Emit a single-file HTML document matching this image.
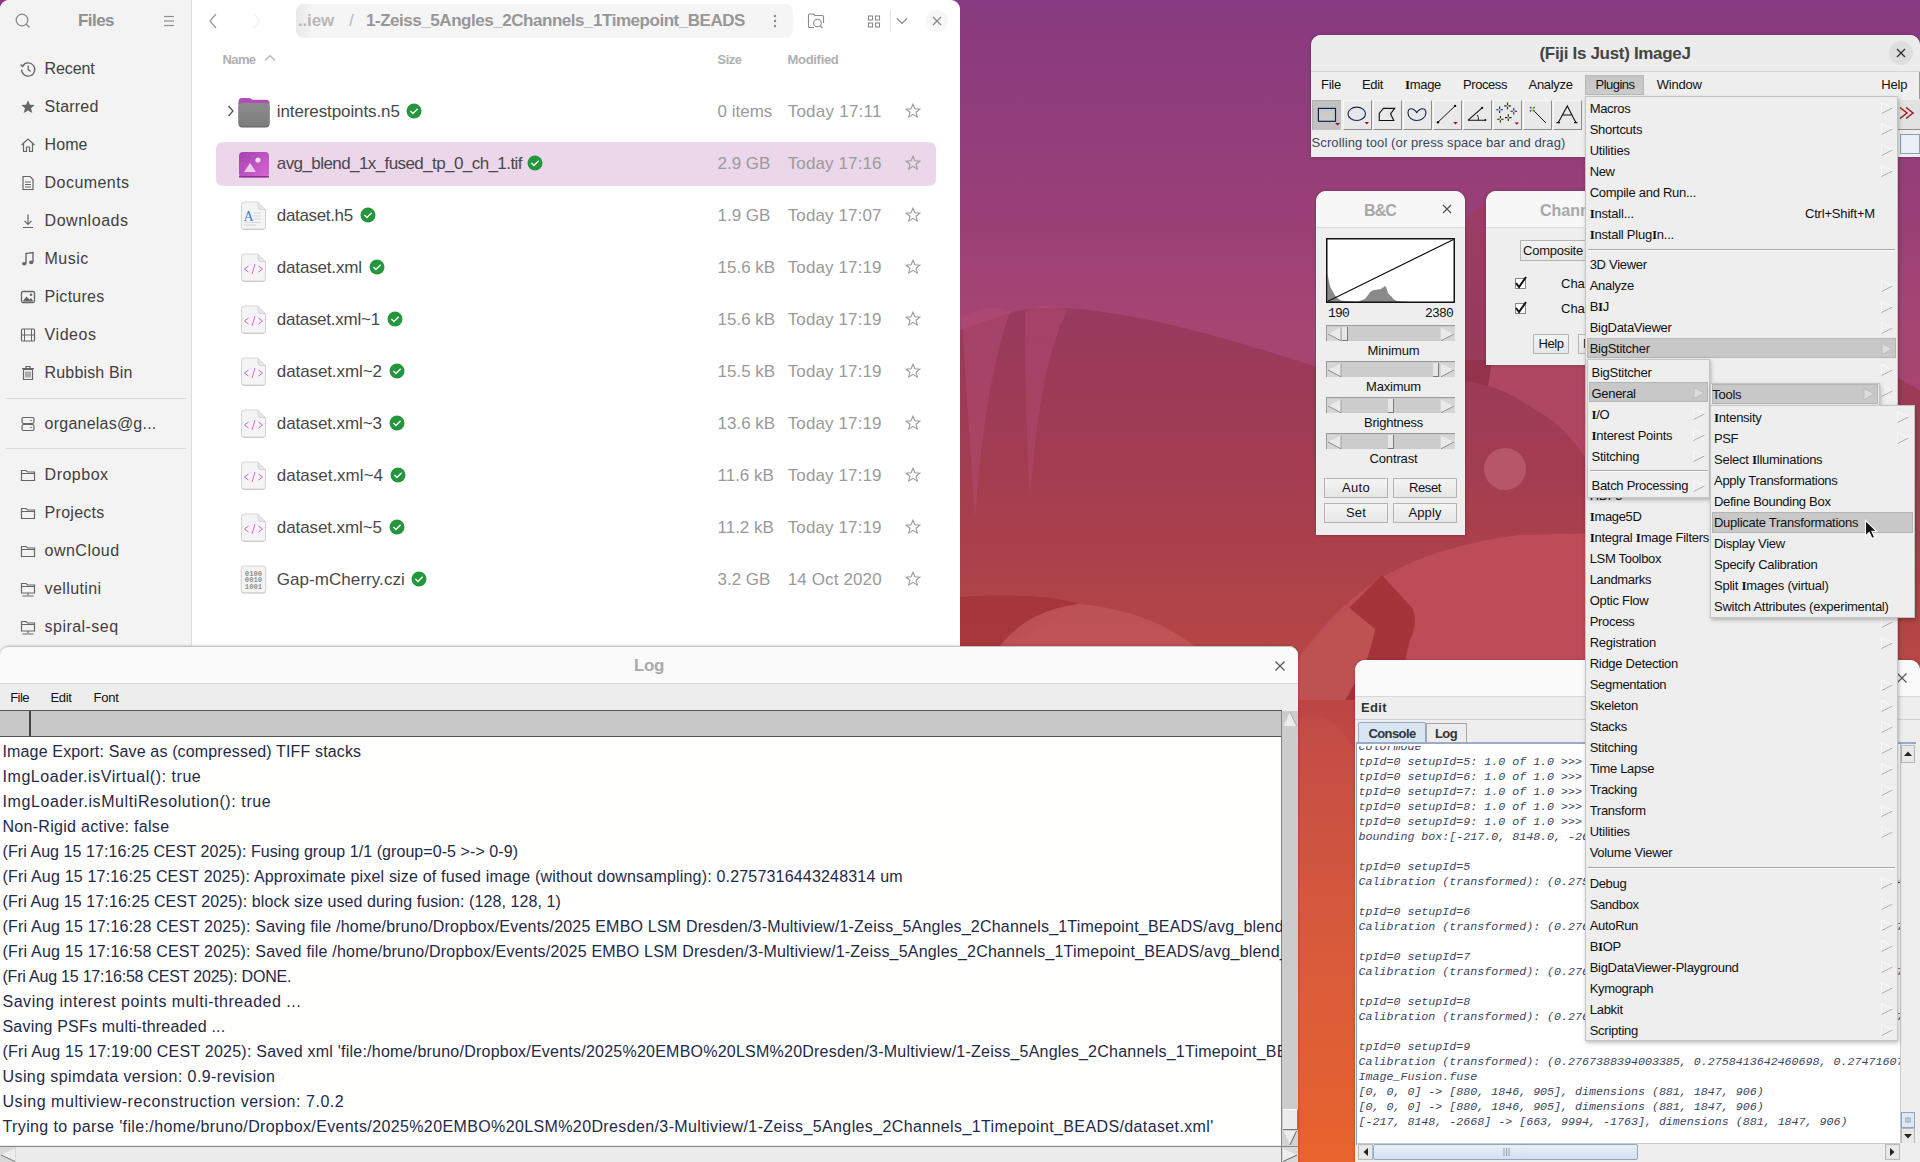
<!DOCTYPE html>
<html><head><meta charset="utf-8"><title>Screen</title>
<style>
html,body{margin:0;padding:0;width:1920px;height:1162px;overflow:hidden;}
body{position:relative;font-family:"Liberation Sans", sans-serif;background:#a0405a;}
.t{position:absolute;white-space:pre;}
.r{position:absolute;}
</style></head><body>
<svg class="r" style="left:0px;top:0px;" width="1920" height="1162" viewBox="0 0 1920 1162">
<defs>
<linearGradient id="bg" x1="0" y1="0" x2="0" y2="1162" gradientUnits="userSpaceOnUse">
<stop offset="0.0000" stop-color="#873a80"/>
<stop offset="0.1721" stop-color="#983f78"/>
<stop offset="0.2840" stop-color="#a74572"/>
<stop offset="1.0000" stop-color="#b04a60"/>
</linearGradient>
<linearGradient id="wg" x1="0" y1="0" x2="0" y2="1162" gradientUnits="userSpaceOnUse">
<stop offset="0.0000" stop-color="#9a3c6a"/>
<stop offset="0.1721" stop-color="#9d3d66"/>
<stop offset="0.2754" stop-color="#983a5d"/>
<stop offset="0.3873" stop-color="#a13c52"/>
<stop offset="0.5336" stop-color="#b14446"/>
<stop offset="0.6196" stop-color="#c24b47"/>
<stop offset="0.7745" stop-color="#d4583d"/>
<stop offset="1.0000" stop-color="#e8642e"/>
</linearGradient>
</defs>
<rect width="1920" height="1162" fill="url(#bg)"/>
<path d="M960 330 L1013 312 Q1090 292 1320 368 L1440 260 Q1470 175 1580 200 L1920 390 L1920 1162 L960 1162 Z" fill="url(#wg)"/>
<path d="M962 318 Q990 300 1010 312 Q985 380 975 520 Q968 420 962 318 Z" fill="#b04a72" opacity="0.55"/>
<path d="M1025 312 Q1045 300 1068 310 Q1040 360 1030 500 Q1024 400 1025 312 Z" fill="#b04a72" opacity="0.5"/>
<path d="M960 597 Q1040 592 1080 604 L1000 650 L960 650 Z" fill="#a33538" opacity="0.8"/>
<path d="M990 660 Q1020 610 1080 604 Q1150 610 1200 650 L1200 660 Z" fill="#c05558" opacity="0.85"/>
<path d="M1297 660 Q1340 600 1388 574 Q1440 545 1520 535 L1600 533 L1600 700 L1297 700 Z" fill="#bc4d58"/>
<path d="M1382 575 L1413 609 Q1418 625 1410 640 L1395 700 L1345 700 L1364 667 Q1372 645 1375 629 L1349 608 Z" fill="#a5343a"/><path d="M1349 608 L1375 629 Q1372 645 1364 667 L1345 700 L1297 700 L1297 662 Q1320 630 1349 608 Z" fill="#be5152"/>
<path d="M1490 360 L1590 360 L1590 465 Q1565 425 1537 411 Q1512 393 1488 386 Z" fill="#ad4762"/><path d="M1465 360 L1492 360 L1488 386 Q1476 382 1465 381 Z" fill="#93324a"/><circle cx="1505" cy="469" r="21" fill="#b85c6c" opacity="0.85"/>
<path d="M1297 720 Q1330 700 1360 760 L1360 700 L1297 700 Z" fill="#b84040" opacity="0.4"/>
</svg>
<div class="r" style="left:0px;top:0px;width:960px;height:670px;background:#ffffff;border-top-left-radius:9px;border-top-right-radius:9px;overflow:hidden;"></div>
<div class="r" style="left:0px;top:0px;width:191px;height:670px;background:#f3f3f3;border-top-left-radius:9px;"></div>
<div class="r" style="left:191px;top:0px;width:1px;height:670px;background:#dedede;"></div>
<svg class="r" style="left:14px;top:12px;" width="18" height="18" viewBox="0 0 18 18"><circle cx="8" cy="8" r="5.8" fill="none" stroke="#8a8a8a" stroke-width="1.3"/><line x1="12.2" y1="12.2" x2="15.5" y2="15.5" stroke="#8a8a8a" stroke-width="1.4"/></svg>
<div class="t" style="left:78.00px;top:11.11px;font-size:17px;line-height:20px;color:#8f8f8f;font-weight:700;letter-spacing:-0.547px;">Files</div>
<svg class="r" style="left:162px;top:15px;" width="14" height="12" viewBox="0 0 14 12"><g stroke="#8f8f8f" stroke-width="1.2"><line x1="2" y1="1.5" x2="12" y2="1.5"/><line x1="2" y1="6" x2="12" y2="6"/><line x1="2" y1="10.5" x2="12" y2="10.5"/></g></svg>
<div class="t" style="left:44.60px;top:58.96px;font-size:16px;line-height:19px;color:#404040;letter-spacing:-0.122px;">Recent</div>
<div class="t" style="left:44.60px;top:96.96px;font-size:16px;line-height:19px;color:#404040;letter-spacing:0.214px;">Starred</div>
<div class="t" style="left:44.60px;top:134.96px;font-size:16px;line-height:19px;color:#404040;letter-spacing:0.074px;">Home</div>
<div class="t" style="left:44.60px;top:172.96px;font-size:16px;line-height:19px;color:#404040;letter-spacing:0.448px;">Documents</div>
<div class="t" style="left:44.60px;top:210.96px;font-size:16px;line-height:19px;color:#404040;letter-spacing:0.531px;">Downloads</div>
<div class="t" style="left:44.60px;top:248.96px;font-size:16px;line-height:19px;color:#404040;letter-spacing:0.441px;">Music</div>
<div class="t" style="left:44.60px;top:286.96px;font-size:16px;line-height:19px;color:#404040;letter-spacing:0.271px;">Pictures</div>
<div class="t" style="left:44.60px;top:324.96px;font-size:16px;line-height:19px;color:#404040;letter-spacing:0.555px;">Videos</div>
<div class="t" style="left:44.60px;top:362.96px;font-size:16px;line-height:19px;color:#404040;letter-spacing:0.151px;">Rubbish Bin</div>
<div class="t" style="left:44.60px;top:413.96px;font-size:16px;line-height:19px;color:#404040;letter-spacing:0.225px;">organelas@g...</div>
<div class="t" style="left:44.60px;top:464.96px;font-size:16px;line-height:19px;color:#404040;letter-spacing:0.498px;">Dropbox</div>
<div class="t" style="left:44.60px;top:502.96px;font-size:16px;line-height:19px;color:#404040;letter-spacing:0.271px;">Projects</div>
<div class="t" style="left:44.60px;top:540.96px;font-size:16px;line-height:19px;color:#404040;letter-spacing:0.473px;">ownCloud</div>
<div class="t" style="left:44.60px;top:578.96px;font-size:16px;line-height:19px;color:#404040;letter-spacing:0.398px;">vellutini</div>
<div class="t" style="left:44.60px;top:616.96px;font-size:16px;line-height:19px;color:#404040;letter-spacing:0.459px;">spiral-seq</div>
<svg class="r" style="left:19px;top:59.5px;" width="18" height="18" viewBox="0 0 18 18"><path d="M3.5 6.2 A6.6 6.6 0 1 1 2.6 9.5" fill="none" stroke="#666666" stroke-width="1.3"/><path d="M1.5 4.5 L3.6 6.6 L5.6 4.2" fill="none" stroke="#666666" stroke-width="1.2"/><path d="M9.2 5.5 V9.6 L11.6 11.5" fill="none" stroke="#666666" stroke-width="1.3"/></svg>
<svg class="r" style="left:19px;top:97.5px;" width="18" height="18" viewBox="0 0 18 18"><path d="M9 2.2 L10.9 6.8 L15.8 7.1 L12 10.3 L13.3 15.1 L9 12.4 L4.7 15.1 L6 10.3 L2.2 7.1 L7.1 6.8 Z" fill="#666666"/></svg>
<svg class="r" style="left:19px;top:135.5px;" width="18" height="18" viewBox="0 0 18 18"><path d="M2.5 9 L9 3 L15.5 9 M4.5 7.5 V15.5 H7.5 V11 H10.5 V15.5 H13.5 V7.5" fill="none" stroke="#666666" stroke-width="1.2"/></svg>
<svg class="r" style="left:19px;top:173.5px;" width="18" height="18" viewBox="0 0 18 18"><path d="M4 2.5 H11 L14 5.5 V15.5 H4 Z" fill="none" stroke="#666666" stroke-width="1.2"/><g stroke="#666666" stroke-width="1"><line x1="6" y1="8" x2="12" y2="8"/><line x1="6" y1="10.5" x2="12" y2="10.5"/><line x1="6" y1="13" x2="12" y2="13"/></g></svg>
<svg class="r" style="left:19px;top:211.5px;" width="18" height="18" viewBox="0 0 18 18"><path d="M9 2.5 V12 M5.5 8.8 L9 12.3 L12.5 8.8 M4 15.5 H14" fill="none" stroke="#666666" stroke-width="1.2"/></svg>
<svg class="r" style="left:19px;top:249.5px;" width="18" height="18" viewBox="0 0 18 18"><path d="M7 13.5 V3.5 L14 2.5 V12" fill="none" stroke="#666666" stroke-width="1.4"/><ellipse cx="5.2" cy="13.8" rx="2.2" ry="1.8" fill="#666666"/><ellipse cx="12.2" cy="12.4" rx="2.2" ry="1.8" fill="#666666"/></svg>
<svg class="r" style="left:19px;top:287.5px;" width="18" height="18" viewBox="0 0 18 18"><rect x="2.5" y="3.5" width="13" height="11" rx="1.5" fill="none" stroke="#666666" stroke-width="1.3"/><path d="M3.5 13.5 L7.5 8.5 L10.5 11.5 L12 10 L14.5 13.5 Z" fill="#666666"/><circle cx="12" cy="6.8" r="1.3" fill="#666666"/></svg>
<svg class="r" style="left:19px;top:325.5px;" width="18" height="18" viewBox="0 0 18 18"><rect x="2.5" y="3" width="13" height="12" rx="1" fill="none" stroke="#666666" stroke-width="1.2"/><g stroke="#666666" stroke-width="1"><line x1="5.5" y1="3" x2="5.5" y2="15"/><line x1="12.5" y1="3" x2="12.5" y2="15"/><line x1="2.5" y1="9" x2="15.5" y2="9"/></g></svg>
<svg class="r" style="left:19px;top:363.5px;" width="18" height="18" viewBox="0 0 18 18"><path d="M4.5 5.5 H13.5 V15.5 H4.5 Z M3 4.5 H15 M7 4.5 V2.5 H11 V4.5" fill="none" stroke="#666666" stroke-width="1.2"/><g stroke="#666666" stroke-width="1"><line x1="7" y1="7.5" x2="7" y2="13.5"/><line x1="9" y1="7.5" x2="9" y2="13.5"/><line x1="11" y1="7.5" x2="11" y2="13.5"/></g></svg>
<svg class="r" style="left:19px;top:414.5px;" width="18" height="18" viewBox="0 0 18 18"><rect x="3" y="2.5" width="12" height="6" rx="1.5" fill="none" stroke="#666666" stroke-width="1.2"/><rect x="3" y="9.5" width="12" height="6" rx="1.5" fill="none" stroke="#666666" stroke-width="1.2"/><circle cx="12" cy="5.5" r="0.8" fill="#666666"/><circle cx="12" cy="12.5" r="0.8" fill="#666666"/></svg>
<svg class="r" style="left:19px;top:465.5px;" width="18" height="18" viewBox="0 0 18 18"><path d="M2.5 4.5 H7 L8.5 6 H15.5 V14.5 H2.5 Z M2.5 7.5 H15.5" fill="none" stroke="#666666" stroke-width="1.2"/></svg>
<svg class="r" style="left:19px;top:503.5px;" width="18" height="18" viewBox="0 0 18 18"><path d="M2.5 4.5 H7 L8.5 6 H15.5 V14.5 H2.5 Z M2.5 7.5 H15.5" fill="none" stroke="#666666" stroke-width="1.2"/></svg>
<svg class="r" style="left:19px;top:541.5px;" width="18" height="18" viewBox="0 0 18 18"><path d="M2.5 4.5 H7 L8.5 6 H15.5 V14.5 H2.5 Z M2.5 7.5 H15.5" fill="none" stroke="#666666" stroke-width="1.2"/></svg>
<svg class="r" style="left:19px;top:579.5px;" width="18" height="18" viewBox="0 0 18 18"><path d="M2.5 3.5 H7 L8.5 5 H15.5 V13 H2.5 Z M2.5 6.5 H15.5 M3.5 16 H14.5 M9 13 V15" fill="none" stroke="#666666" stroke-width="1.2"/></svg>
<svg class="r" style="left:19px;top:617.5px;" width="18" height="18" viewBox="0 0 18 18"><path d="M2.5 3.5 H7 L8.5 5 H15.5 V13 H2.5 Z M2.5 6.5 H15.5 M3.5 16 H14.5 M9 13 V15" fill="none" stroke="#666666" stroke-width="1.2"/></svg>
<div class="r" style="left:6px;top:398px;width:180px;height:1px;background:#dcdcdc;"></div>
<div class="r" style="left:6px;top:448px;width:180px;height:1px;background:#dcdcdc;"></div>
<svg class="r" style="left:206px;top:12px;" width="14" height="18" viewBox="0 0 14 18"><path d="M10 2 L4 9 L10 16" fill="none" stroke="#9a9a9a" stroke-width="1.3"/></svg>
<svg class="r" style="left:250px;top:12px;" width="14" height="18" viewBox="0 0 14 18"><path d="M4 2 L10 9 L4 16" fill="none" stroke="#f3f3f3" stroke-width="1.3"/></svg>
<div class="r" style="left:296px;top:4px;width:497px;height:34px;background:linear-gradient(90deg,#e8e8e8 0px,#f5f5f5 16px,#f5f5f5 100%);border-radius:8px;"></div>
<div class="t" style="left:298.00px;top:11.11px;font-size:17px;line-height:20px;color:#b8b8b8;font-weight:700;letter-spacing:-0.166px;">..iew</div>
<div class="t" style="left:349.00px;top:11.11px;font-size:17px;line-height:20px;color:#b8b8b8;">/</div>
<div class="t" style="left:366.00px;top:11.11px;font-size:17px;line-height:20px;color:#979797;font-weight:700;letter-spacing:-0.462px;">1-Zeiss_5Angles_2Channels_1Timepoint_BEADS</div>
<svg class="r" style="left:770px;top:12px;" width="10" height="18" viewBox="0 0 10 18"><g fill="#8a8a8a"><circle cx="5" cy="4" r="1.2"/><circle cx="5" cy="9" r="1.2"/><circle cx="5" cy="14" r="1.2"/></g></svg>
<svg class="r" style="left:805px;top:10px;" width="22" height="22" viewBox="0 0 22 22"><path d="M9 17.5 H4.5 Q3.5 17.5 3.5 16.5 V5 Q3.5 4 4.5 4 H8.5 L10 5.5 H17.5 Q18.5 5.5 18.5 6.5 V13" fill="none" stroke="#8a8a8a" stroke-width="1.1"/><circle cx="12.5" cy="13" r="3.8" fill="none" stroke="#8a8a8a" stroke-width="1.1"/><line x1="15.3" y1="15.8" x2="17.5" y2="18" stroke="#8a8a8a" stroke-width="1.2"/></svg>
<svg class="r" style="left:866px;top:14px;" width="16" height="16" viewBox="0 0 16 16"><g fill="none" stroke="#8a8a8a" stroke-width="1.1"><rect x="2.5" y="2" width="4" height="4"/><rect x="9.5" y="2" width="4" height="4"/><rect x="2.5" y="9" width="4" height="4"/><rect x="9.5" y="9" width="4" height="4"/></g></svg>
<div class="r" style="left:890px;top:10px;width:1px;height:22px;background:#e4e4e4;"></div>
<svg class="r" style="left:895px;top:16px;" width="14" height="10" viewBox="0 0 14 10"><path d="M2 2.5 L7 7.5 L12 2.5" fill="none" stroke="#8a8a8a" stroke-width="1.2"/></svg>
<div class="r" style="left:926px;top:10px;width:22px;height:22px;background:#f7f7f7;border-radius:11px;"></div>
<svg class="r" style="left:931px;top:15px;" width="12" height="12" viewBox="0 0 12 12"><path d="M2 2 L10 10 M10 2 L2 10" stroke="#8a8a8a" stroke-width="1.3"/></svg>
<div class="t" style="left:222.50px;top:51.50px;font-size:13px;line-height:16px;color:#b0b0b0;font-weight:700;letter-spacing:-0.605px;">Name</div>
<svg class="r" style="left:263px;top:53px;" width="14" height="10" viewBox="0 0 14 10"><path d="M2 7.5 L7 2.5 L12 7.5" fill="none" stroke="#b0b0b0" stroke-width="1.2"/></svg>
<div class="t" style="left:717.50px;top:51.50px;font-size:13px;line-height:16px;color:#b0b0b0;font-weight:700;letter-spacing:-0.504px;">Size</div>
<div class="t" style="left:787.50px;top:51.50px;font-size:13px;line-height:16px;color:#b0b0b0;font-weight:700;letter-spacing:-0.303px;">Modified</div>
<div class="r" style="left:216px;top:142px;width:720px;height:44px;background:#ebd6ea;border-radius:7px;"></div>
<div class="t" style="left:276.80px;top:102.41px;font-size:17px;line-height:20px;color:#484848;letter-spacing:-0.101px;">interestpoints.n5</div>
<svg class="r" style="left:406px;top:103px;" width="16" height="16" viewBox="0 0 16 16"><circle cx="8" cy="8" r="7.5" fill="#24963c"/><path d="M4.4 8 L6.9 10.5 L11.7 5.7" fill="none" stroke="#fff" stroke-width="1.25"/></svg>
<div class="t" style="left:717.50px;top:102.41px;font-size:17px;line-height:20px;color:#9a9a9a;">0 items</div>
<div class="t" style="left:787.70px;top:102.41px;font-size:17px;line-height:20px;color:#9a9a9a;letter-spacing:0.241px;">Today 17:11</div>
<svg class="r" style="left:904px;top:102px;" width="18" height="18" viewBox="0 0 18 18"><path d="M9 2.2 L10.9 6.8 L15.8 7.1 L12 10.3 L13.3 15.1 L9 12.4 L4.7 15.1 L6 10.3 L2.2 7.1 L7.1 6.8 Z" fill="none" stroke="#9a9a9a" stroke-width="1.1"/></svg>
<svg class="r" style="left:227px;top:105px;" width="8" height="12" viewBox="0 0 8 12"><path d="M1.5 1 L6 6 L1.5 11" fill="none" stroke="#555" stroke-width="1.3"/></svg>
<svg class="r" style="left:237px;top:97px;" width="34" height="31" viewBox="0 0 34 31"><defs><linearGradient id="fg" x1="0" y1="0" x2="0" y2="1"><stop offset="0" stop-color="#8c8c8c"/><stop offset="1" stop-color="#7c7c7c"/></linearGradient></defs><path d="M1.5 5 Q1.5 1 5 1 H12 Q14 1 15.5 2.8 H29 Q32.5 2.8 32.5 6 V12 H1.5 Z" fill="#b04cb8"/><rect x="1.5" y="7" width="31" height="23.5" rx="4" fill="#5e5e5e"/><rect x="1.5" y="6" width="31" height="23.5" rx="4" fill="url(#fg)"/></svg>
<div class="t" style="left:276.80px;top:154.41px;font-size:17px;line-height:20px;color:#484848;letter-spacing:-0.583px;">avg_blend_1x_fused_tp_0_ch_1.tif</div>
<svg class="r" style="left:527px;top:155px;" width="16" height="16" viewBox="0 0 16 16"><circle cx="8" cy="8" r="7.5" fill="#24963c"/><path d="M4.4 8 L6.9 10.5 L11.7 5.7" fill="none" stroke="#fff" stroke-width="1.25"/></svg>
<div class="t" style="left:717.50px;top:154.41px;font-size:17px;line-height:20px;color:#9a9a9a;">2.9 GB</div>
<div class="t" style="left:787.70px;top:154.41px;font-size:17px;line-height:20px;color:#9a9a9a;letter-spacing:0.126px;">Today 17:16</div>
<svg class="r" style="left:904px;top:154px;" width="18" height="18" viewBox="0 0 18 18"><path d="M9 2.2 L10.9 6.8 L15.8 7.1 L12 10.3 L13.3 15.1 L9 12.4 L4.7 15.1 L6 10.3 L2.2 7.1 L7.1 6.8 Z" fill="none" stroke="#9a9a9a" stroke-width="1.1"/></svg>
<svg class="r" style="left:238px;top:151px;" width="32" height="28" viewBox="0 0 32 28"><defs><linearGradient id="ig" x1="0" y1="0" x2="1" y2="1"><stop offset="0" stop-color="#a53fb0"/><stop offset="1" stop-color="#d668d4"/></linearGradient></defs><rect x="1" y="1" width="30" height="25.5" rx="4" fill="url(#ig)"/><rect x="1" y="25" width="30" height="1.5" fill="#8b3291"/><path d="M6 21 L12 12 L18 21 Z" fill="#f0c8ec"/><circle cx="20" cy="9" r="2.6" fill="#f4d8f0"/></svg>
<div class="t" style="left:276.80px;top:206.41px;font-size:17px;line-height:20px;color:#484848;letter-spacing:-0.338px;">dataset.h5</div>
<svg class="r" style="left:360px;top:207px;" width="16" height="16" viewBox="0 0 16 16"><circle cx="8" cy="8" r="7.5" fill="#24963c"/><path d="M4.4 8 L6.9 10.5 L11.7 5.7" fill="none" stroke="#fff" stroke-width="1.25"/></svg>
<div class="t" style="left:717.50px;top:206.41px;font-size:17px;line-height:20px;color:#9a9a9a;">1.9 GB</div>
<div class="t" style="left:787.70px;top:206.41px;font-size:17px;line-height:20px;color:#9a9a9a;letter-spacing:0.126px;">Today 17:07</div>
<svg class="r" style="left:904px;top:206px;" width="18" height="18" viewBox="0 0 18 18"><path d="M9 2.2 L10.9 6.8 L15.8 7.1 L12 10.3 L13.3 15.1 L9 12.4 L4.7 15.1 L6 10.3 L2.2 7.1 L7.1 6.8 Z" fill="none" stroke="#9a9a9a" stroke-width="1.1"/></svg>
<svg class="r" style="left:240px;top:201px;" width="27" height="30" viewBox="0 0 27 30"><path d="M1.5 4 Q1.5 1 4.5 1 H18 L25.5 8.5 V26 Q25.5 29 22.5 29 H4.5 Q1.5 29 1.5 26 Z" fill="#c8c8c8"/><path d="M1.5 3.5 Q1.5 1 4 1 H18 L25.5 8.5 V25.5 Q25.5 28 23 28 H4 Q1.5 28 1.5 25.5 Z" fill="#f4f4f4" stroke="#d2d2d2" stroke-width="0.9"/><path d="M18 1 V6 Q18 8.5 20.5 8.5 H25.5" fill="#e6e6e6" stroke="#d2d2d2" stroke-width="0.9"/><text x="3.5" y="20" font-family="Liberation Serif" font-size="14" fill="#3b7fd0">A</text><g stroke="#cfcfcf" stroke-width="0.8"><line x1="14" y1="12" x2="21" y2="12"/><line x1="14" y1="15" x2="21" y2="15"/><line x1="14" y1="18" x2="21" y2="18"/><line x1="4" y1="21.5" x2="21" y2="21.5"/><line x1="4" y1="24" x2="16" y2="24"/></g></svg>
<div class="t" style="left:276.80px;top:258.41px;font-size:17px;line-height:20px;color:#484848;letter-spacing:-0.173px;">dataset.xml</div>
<svg class="r" style="left:369px;top:259px;" width="16" height="16" viewBox="0 0 16 16"><circle cx="8" cy="8" r="7.5" fill="#24963c"/><path d="M4.4 8 L6.9 10.5 L11.7 5.7" fill="none" stroke="#fff" stroke-width="1.25"/></svg>
<div class="t" style="left:717.50px;top:258.41px;font-size:17px;line-height:20px;color:#9a9a9a;">15.6 kB</div>
<div class="t" style="left:787.70px;top:258.41px;font-size:17px;line-height:20px;color:#9a9a9a;letter-spacing:0.126px;">Today 17:19</div>
<svg class="r" style="left:904px;top:258px;" width="18" height="18" viewBox="0 0 18 18"><path d="M9 2.2 L10.9 6.8 L15.8 7.1 L12 10.3 L13.3 15.1 L9 12.4 L4.7 15.1 L6 10.3 L2.2 7.1 L7.1 6.8 Z" fill="none" stroke="#9a9a9a" stroke-width="1.1"/></svg>
<svg class="r" style="left:240px;top:253px;" width="27" height="30" viewBox="0 0 27 30"><path d="M1.5 4 Q1.5 1 4.5 1 H18 L25.5 8.5 V26 Q25.5 29 22.5 29 H4.5 Q1.5 29 1.5 26 Z" fill="#c8c8c8"/><path d="M1.5 3.5 Q1.5 1 4 1 H18 L25.5 8.5 V25.5 Q25.5 28 23 28 H4 Q1.5 28 1.5 25.5 Z" fill="#f4f4f4" stroke="#d2d2d2" stroke-width="0.9"/><path d="M18 1 V6 Q18 8.5 20.5 8.5 H25.5" fill="#e6e6e6" stroke="#d2d2d2" stroke-width="0.9"/><path d="M8.5 13 L4.5 16 L8.5 19 M18.5 13 L22.5 16 L18.5 19 M15 11 L12 21" fill="none" stroke="#d865d4" stroke-width="1"/></svg>
<div class="t" style="left:276.80px;top:310.41px;font-size:17px;line-height:20px;color:#484848;letter-spacing:-0.252px;">dataset.xml~1</div>
<svg class="r" style="left:387px;top:311px;" width="16" height="16" viewBox="0 0 16 16"><circle cx="8" cy="8" r="7.5" fill="#24963c"/><path d="M4.4 8 L6.9 10.5 L11.7 5.7" fill="none" stroke="#fff" stroke-width="1.25"/></svg>
<div class="t" style="left:717.50px;top:310.41px;font-size:17px;line-height:20px;color:#9a9a9a;">15.6 kB</div>
<div class="t" style="left:787.70px;top:310.41px;font-size:17px;line-height:20px;color:#9a9a9a;letter-spacing:0.126px;">Today 17:19</div>
<svg class="r" style="left:904px;top:310px;" width="18" height="18" viewBox="0 0 18 18"><path d="M9 2.2 L10.9 6.8 L15.8 7.1 L12 10.3 L13.3 15.1 L9 12.4 L4.7 15.1 L6 10.3 L2.2 7.1 L7.1 6.8 Z" fill="none" stroke="#9a9a9a" stroke-width="1.1"/></svg>
<svg class="r" style="left:240px;top:305px;" width="27" height="30" viewBox="0 0 27 30"><path d="M1.5 4 Q1.5 1 4.5 1 H18 L25.5 8.5 V26 Q25.5 29 22.5 29 H4.5 Q1.5 29 1.5 26 Z" fill="#c8c8c8"/><path d="M1.5 3.5 Q1.5 1 4 1 H18 L25.5 8.5 V25.5 Q25.5 28 23 28 H4 Q1.5 28 1.5 25.5 Z" fill="#f4f4f4" stroke="#d2d2d2" stroke-width="0.9"/><path d="M18 1 V6 Q18 8.5 20.5 8.5 H25.5" fill="#e6e6e6" stroke="#d2d2d2" stroke-width="0.9"/><path d="M8.5 13 L4.5 16 L8.5 19 M18.5 13 L22.5 16 L18.5 19 M15 11 L12 21" fill="none" stroke="#d865d4" stroke-width="1"/></svg>
<div class="t" style="left:276.80px;top:362.41px;font-size:17px;line-height:20px;color:#484848;letter-spacing:-0.099px;">dataset.xml~2</div>
<svg class="r" style="left:389px;top:363px;" width="16" height="16" viewBox="0 0 16 16"><circle cx="8" cy="8" r="7.5" fill="#24963c"/><path d="M4.4 8 L6.9 10.5 L11.7 5.7" fill="none" stroke="#fff" stroke-width="1.25"/></svg>
<div class="t" style="left:717.50px;top:362.41px;font-size:17px;line-height:20px;color:#9a9a9a;">15.5 kB</div>
<div class="t" style="left:787.70px;top:362.41px;font-size:17px;line-height:20px;color:#9a9a9a;letter-spacing:0.126px;">Today 17:19</div>
<svg class="r" style="left:904px;top:362px;" width="18" height="18" viewBox="0 0 18 18"><path d="M9 2.2 L10.9 6.8 L15.8 7.1 L12 10.3 L13.3 15.1 L9 12.4 L4.7 15.1 L6 10.3 L2.2 7.1 L7.1 6.8 Z" fill="none" stroke="#9a9a9a" stroke-width="1.1"/></svg>
<svg class="r" style="left:240px;top:357px;" width="27" height="30" viewBox="0 0 27 30"><path d="M1.5 4 Q1.5 1 4.5 1 H18 L25.5 8.5 V26 Q25.5 29 22.5 29 H4.5 Q1.5 29 1.5 26 Z" fill="#c8c8c8"/><path d="M1.5 3.5 Q1.5 1 4 1 H18 L25.5 8.5 V25.5 Q25.5 28 23 28 H4 Q1.5 28 1.5 25.5 Z" fill="#f4f4f4" stroke="#d2d2d2" stroke-width="0.9"/><path d="M18 1 V6 Q18 8.5 20.5 8.5 H25.5" fill="#e6e6e6" stroke="#d2d2d2" stroke-width="0.9"/><path d="M8.5 13 L4.5 16 L8.5 19 M18.5 13 L22.5 16 L18.5 19 M15 11 L12 21" fill="none" stroke="#d865d4" stroke-width="1"/></svg>
<div class="t" style="left:276.80px;top:414.41px;font-size:17px;line-height:20px;color:#484848;letter-spacing:-0.099px;">dataset.xml~3</div>
<svg class="r" style="left:389px;top:415px;" width="16" height="16" viewBox="0 0 16 16"><circle cx="8" cy="8" r="7.5" fill="#24963c"/><path d="M4.4 8 L6.9 10.5 L11.7 5.7" fill="none" stroke="#fff" stroke-width="1.25"/></svg>
<div class="t" style="left:717.50px;top:414.41px;font-size:17px;line-height:20px;color:#9a9a9a;">13.6 kB</div>
<div class="t" style="left:787.70px;top:414.41px;font-size:17px;line-height:20px;color:#9a9a9a;letter-spacing:0.126px;">Today 17:19</div>
<svg class="r" style="left:904px;top:414px;" width="18" height="18" viewBox="0 0 18 18"><path d="M9 2.2 L10.9 6.8 L15.8 7.1 L12 10.3 L13.3 15.1 L9 12.4 L4.7 15.1 L6 10.3 L2.2 7.1 L7.1 6.8 Z" fill="none" stroke="#9a9a9a" stroke-width="1.1"/></svg>
<svg class="r" style="left:240px;top:409px;" width="27" height="30" viewBox="0 0 27 30"><path d="M1.5 4 Q1.5 1 4.5 1 H18 L25.5 8.5 V26 Q25.5 29 22.5 29 H4.5 Q1.5 29 1.5 26 Z" fill="#c8c8c8"/><path d="M1.5 3.5 Q1.5 1 4 1 H18 L25.5 8.5 V25.5 Q25.5 28 23 28 H4 Q1.5 28 1.5 25.5 Z" fill="#f4f4f4" stroke="#d2d2d2" stroke-width="0.9"/><path d="M18 1 V6 Q18 8.5 20.5 8.5 H25.5" fill="#e6e6e6" stroke="#d2d2d2" stroke-width="0.9"/><path d="M8.5 13 L4.5 16 L8.5 19 M18.5 13 L22.5 16 L18.5 19 M15 11 L12 21" fill="none" stroke="#d865d4" stroke-width="1"/></svg>
<div class="t" style="left:276.80px;top:466.41px;font-size:17px;line-height:20px;color:#484848;letter-spacing:-0.022px;">dataset.xml~4</div>
<svg class="r" style="left:390px;top:467px;" width="16" height="16" viewBox="0 0 16 16"><circle cx="8" cy="8" r="7.5" fill="#24963c"/><path d="M4.4 8 L6.9 10.5 L11.7 5.7" fill="none" stroke="#fff" stroke-width="1.25"/></svg>
<div class="t" style="left:717.50px;top:466.41px;font-size:17px;line-height:20px;color:#9a9a9a;">11.6 kB</div>
<div class="t" style="left:787.70px;top:466.41px;font-size:17px;line-height:20px;color:#9a9a9a;letter-spacing:0.126px;">Today 17:19</div>
<svg class="r" style="left:904px;top:466px;" width="18" height="18" viewBox="0 0 18 18"><path d="M9 2.2 L10.9 6.8 L15.8 7.1 L12 10.3 L13.3 15.1 L9 12.4 L4.7 15.1 L6 10.3 L2.2 7.1 L7.1 6.8 Z" fill="none" stroke="#9a9a9a" stroke-width="1.1"/></svg>
<svg class="r" style="left:240px;top:461px;" width="27" height="30" viewBox="0 0 27 30"><path d="M1.5 4 Q1.5 1 4.5 1 H18 L25.5 8.5 V26 Q25.5 29 22.5 29 H4.5 Q1.5 29 1.5 26 Z" fill="#c8c8c8"/><path d="M1.5 3.5 Q1.5 1 4 1 H18 L25.5 8.5 V25.5 Q25.5 28 23 28 H4 Q1.5 28 1.5 25.5 Z" fill="#f4f4f4" stroke="#d2d2d2" stroke-width="0.9"/><path d="M18 1 V6 Q18 8.5 20.5 8.5 H25.5" fill="#e6e6e6" stroke="#d2d2d2" stroke-width="0.9"/><path d="M8.5 13 L4.5 16 L8.5 19 M18.5 13 L22.5 16 L18.5 19 M15 11 L12 21" fill="none" stroke="#d865d4" stroke-width="1"/></svg>
<div class="t" style="left:276.80px;top:518.41px;font-size:17px;line-height:20px;color:#484848;letter-spacing:-0.099px;">dataset.xml~5</div>
<svg class="r" style="left:389px;top:519px;" width="16" height="16" viewBox="0 0 16 16"><circle cx="8" cy="8" r="7.5" fill="#24963c"/><path d="M4.4 8 L6.9 10.5 L11.7 5.7" fill="none" stroke="#fff" stroke-width="1.25"/></svg>
<div class="t" style="left:717.50px;top:518.41px;font-size:17px;line-height:20px;color:#9a9a9a;">11.2 kB</div>
<div class="t" style="left:787.70px;top:518.41px;font-size:17px;line-height:20px;color:#9a9a9a;letter-spacing:0.126px;">Today 17:19</div>
<svg class="r" style="left:904px;top:518px;" width="18" height="18" viewBox="0 0 18 18"><path d="M9 2.2 L10.9 6.8 L15.8 7.1 L12 10.3 L13.3 15.1 L9 12.4 L4.7 15.1 L6 10.3 L2.2 7.1 L7.1 6.8 Z" fill="none" stroke="#9a9a9a" stroke-width="1.1"/></svg>
<svg class="r" style="left:240px;top:513px;" width="27" height="30" viewBox="0 0 27 30"><path d="M1.5 4 Q1.5 1 4.5 1 H18 L25.5 8.5 V26 Q25.5 29 22.5 29 H4.5 Q1.5 29 1.5 26 Z" fill="#c8c8c8"/><path d="M1.5 3.5 Q1.5 1 4 1 H18 L25.5 8.5 V25.5 Q25.5 28 23 28 H4 Q1.5 28 1.5 25.5 Z" fill="#f4f4f4" stroke="#d2d2d2" stroke-width="0.9"/><path d="M18 1 V6 Q18 8.5 20.5 8.5 H25.5" fill="#e6e6e6" stroke="#d2d2d2" stroke-width="0.9"/><path d="M8.5 13 L4.5 16 L8.5 19 M18.5 13 L22.5 16 L18.5 19 M15 11 L12 21" fill="none" stroke="#d865d4" stroke-width="1"/></svg>
<div class="t" style="left:276.80px;top:570.41px;font-size:17px;line-height:20px;color:#484848;letter-spacing:0.055px;">Gap-mCherry.czi</div>
<svg class="r" style="left:411px;top:571px;" width="16" height="16" viewBox="0 0 16 16"><circle cx="8" cy="8" r="7.5" fill="#24963c"/><path d="M4.4 8 L6.9 10.5 L11.7 5.7" fill="none" stroke="#fff" stroke-width="1.25"/></svg>
<div class="t" style="left:717.50px;top:570.41px;font-size:17px;line-height:20px;color:#9a9a9a;">3.2 GB</div>
<div class="t" style="left:787.70px;top:570.41px;font-size:17px;line-height:20px;color:#9a9a9a;letter-spacing:0.128px;">14 Oct 2020</div>
<svg class="r" style="left:904px;top:570px;" width="18" height="18" viewBox="0 0 18 18"><path d="M9 2.2 L10.9 6.8 L15.8 7.1 L12 10.3 L13.3 15.1 L9 12.4 L4.7 15.1 L6 10.3 L2.2 7.1 L7.1 6.8 Z" fill="none" stroke="#9a9a9a" stroke-width="1.1"/></svg>
<svg class="r" style="left:240px;top:565px;" width="27" height="30" viewBox="0 0 27 30"><rect x="1" y="1.5" width="25" height="27" rx="3" fill="#c8c8c8"/><rect x="1.2" y="1" width="24.6" height="26.8" rx="3" fill="#f4f4f4" stroke="#d0d0d0" stroke-width="0.9"/><g font-family="Liberation Mono" font-size="7.2" font-weight="700" fill="#8f8f8f" text-anchor="middle"><text x="13.5" y="10.5">0100</text><text x="13.5" y="17.2">0010</text><text x="13.5" y="24">1001</text></g></svg>
<div class="r" style="left:0px;top:646px;width:1298px;height:516px;background:#eeeeee;border-top-left-radius:9px;border-top-right-radius:9px;overflow:hidden;box-shadow:0 0 3px rgba(0,0,0,0.25);"></div>
<div class="r" style="left:0px;top:646px;width:1298px;height:37px;background:#fafafa;border-top-left-radius:9px;border-top-right-radius:9px;border-top:1px solid #c4c4c4;box-sizing:border-box;"></div>
<div class="r" style="left:0px;top:683px;width:1298px;height:1px;background:#d6d6d6;"></div>
<div class="t" style="left:634.00px;top:656.11px;font-size:17px;line-height:20px;color:#a9a9a9;font-weight:700;letter-spacing:-0.391px;">Log</div>
<svg class="r" style="left:1273px;top:659px;" width="14" height="14" viewBox="0 0 14 14"><path d="M2.5 2.5 L11.5 11.5 M11.5 2.5 L2.5 11.5" stroke="#555" stroke-width="1.2"/></svg>
<div class="r" style="left:0px;top:684px;width:1298px;height:27px;background:#ededed;"></div>
<div class="t" style="left:10.30px;top:689.50px;font-size:13px;line-height:16px;color:#111;letter-spacing:-0.613px;">File</div>
<div class="t" style="left:50.50px;top:689.50px;font-size:13px;line-height:16px;color:#111;letter-spacing:-0.352px;">Edit</div>
<div class="t" style="left:93.50px;top:689.50px;font-size:13px;line-height:16px;color:#111;letter-spacing:-0.254px;">Font</div>
<div class="r" style="left:0px;top:710px;width:1282px;height:1.5px;background:#555;"></div>
<div class="r" style="left:0px;top:711px;width:1282px;height:25px;background:#c8c8c8;"></div>
<div class="r" style="left:29px;top:711px;width:1.5px;height:25px;background:#444;"></div>
<div class="r" style="left:0px;top:736px;width:1282px;height:1.5px;background:#555;"></div>
<div class="r" style="left:0px;top:737px;width:1282px;height:408px;background:#fefefc;"></div>
<div class="r" style="left:1281px;top:711px;width:17px;height:435px;background:#cccccc;border-left:1.5px solid #858585;box-sizing:border-box;"></div>
<svg class="r" style="left:1282px;top:711px;" width="16" height="16" viewBox="0 0 16 16"><path d="M8 1 L14.5 15 H1.5 Z" fill="#ececec"/><path d="M8 1 L14.5 15" stroke="#9a9a9a" stroke-width="0.8"/></svg>
<div class="r" style="left:1282.5px;top:1109px;width:15.5px;height:21px;background:#ececec;border-right:1.5px solid #7a7a7a;border-bottom:1.5px solid #7a7a7a;border-top:1px solid #fafafa;box-sizing:border-box;"></div>
<svg class="r" style="left:1282px;top:1130px;" width="16" height="16" viewBox="0 0 16 16"><rect width="16" height="16" fill="#d2d2d2"/><path d="M1.5 1 H14.5 L8 15 Z" fill="#ececec"/><path d="M14.5 1 L8 15" stroke="#555" stroke-width="0.9"/></svg>
<div class="r" style="left:0px;top:1146px;width:1298px;height:16px;background:#ececec;border-top:1.5px solid #858585;box-sizing:border-box;"></div>
<div class="r" style="left:1281px;top:1146px;width:1.5px;height:16px;background:#858585;"></div>
<svg class="r" style="left:0px;top:1147px;" width="16" height="15" viewBox="0 0 16 15"><rect width="16" height="15" fill="#d8d8d8"/><path d="M1 8 L15 1.5 V14.5 Z" fill="#eeeeee"/><path d="M1 8 L15 14.5" stroke="#666" stroke-width="0.9"/></svg>
<svg class="r" style="left:1282px;top:1147px;" width="16" height="15" viewBox="0 0 16 15"><rect width="16" height="15" fill="#d8d8d8"/><path d="M15 8 L1 1.5 V14.5 Z" fill="#eeeeee"/><path d="M15 8 L1 14.5" stroke="#555" stroke-width="0.9"/></svg>
<div class="r" style="left:0;top:737px;width:1282px;height:408px;overflow:hidden;">
<div class="t" style="left:2.50px;top:4.96px;font-size:16px;line-height:19px;color:#1e2a48;letter-spacing:0.151px;">Image Export: Save as (compressed) TIFF stacks</div>
<div class="t" style="left:2.50px;top:29.96px;font-size:16px;line-height:19px;color:#1e2a48;letter-spacing:0.557px;">ImgLoader.isVirtual(): true</div>
<div class="t" style="left:2.50px;top:54.96px;font-size:16px;line-height:19px;color:#1e2a48;letter-spacing:0.591px;">ImgLoader.isMultiResolution(): true</div>
<div class="t" style="left:2.50px;top:79.96px;font-size:16px;line-height:19px;color:#1e2a48;letter-spacing:0.295px;">Non-Rigid active: false</div>
<div class="t" style="left:2.50px;top:104.96px;font-size:16px;line-height:19px;color:#1e2a48;letter-spacing:0.071px;">(Fri Aug 15 17:16:25 CEST 2025): Fusing group 1/1 (group=0-5 &gt;-&gt; 0-9)</div>
<div class="t" style="left:2.50px;top:129.96px;font-size:16px;line-height:19px;color:#1e2a48;letter-spacing:0.188px;">(Fri Aug 15 17:16:25 CEST 2025): Approximate pixel size of fused image (without downsampling): 0.2757316443248314 um</div>
<div class="t" style="left:2.50px;top:154.96px;font-size:16px;line-height:19px;color:#1e2a48;letter-spacing:0.096px;">(Fri Aug 15 17:16:25 CEST 2025): block size used during fusion: (128, 128, 1)</div>
<div class="t" style="left:2.50px;top:179.96px;font-size:16px;line-height:19px;color:#1e2a48;letter-spacing:0.205px;">(Fri Aug 15 17:16:28 CEST 2025): Saving file /home/bruno/Dropbox/Events/2025 EMBO LSM Dresden/3-Multiview/1-Zeiss_5Angles_2Channels_1Timepoint_BEADS/avg_blend_1x_fused_tp_0_ch_1.tif</div>
<div class="t" style="left:2.50px;top:204.96px;font-size:16px;line-height:19px;color:#1e2a48;letter-spacing:0.205px;">(Fri Aug 15 17:16:58 CEST 2025): Saved file /home/bruno/Dropbox/Events/2025 EMBO LSM Dresden/3-Multiview/1-Zeiss_5Angles_2Channels_1Timepoint_BEADS/avg_blend_1x_fused_tp_0_ch_1.tif</div>
<div class="t" style="left:2.50px;top:229.96px;font-size:16px;line-height:19px;color:#1e2a48;letter-spacing:-0.211px;">(Fri Aug 15 17:16:58 CEST 2025): DONE.</div>
<div class="t" style="left:2.50px;top:254.96px;font-size:16px;line-height:19px;color:#1e2a48;letter-spacing:0.519px;">Saving interest points multi-threaded ...</div>
<div class="t" style="left:2.50px;top:279.96px;font-size:16px;line-height:19px;color:#1e2a48;letter-spacing:0.195px;">Saving PSFs multi-threaded ...</div>
<div class="t" style="left:2.50px;top:304.96px;font-size:16px;line-height:19px;color:#1e2a48;letter-spacing:0.233px;">(Fri Aug 15 17:19:00 CEST 2025): Saved xml &#x27;file:/home/bruno/Dropbox/Events/2025%20EMBO%20LSM%20Dresden/3-Multiview/1-Zeiss_5Angles_2Channels_1Timepoint_BEADS/dataset.xml&#x27;</div>
<div class="t" style="left:2.50px;top:329.96px;font-size:16px;line-height:19px;color:#1e2a48;letter-spacing:0.414px;">Using spimdata version: 0.9-revision</div>
<div class="t" style="left:2.50px;top:354.96px;font-size:16px;line-height:19px;color:#1e2a48;letter-spacing:0.540px;">Using multiview-reconstruction version: 7.0.2</div>
<div class="t" style="left:2.50px;top:379.96px;font-size:16px;line-height:19px;color:#1e2a48;letter-spacing:0.379px;">Trying to parse &#x27;file:/home/bruno/Dropbox/Events/2025%20EMBO%20LSM%20Dresden/3-Multiview/1-Zeiss_5Angles_2Channels_1Timepoint_BEADS/dataset.xml&#x27;</div>
</div>
<div class="r" style="left:1355px;top:660px;width:565px;height:502px;background:#eeeeee;border-radius:10px 10px 0 0;overflow:hidden;box-shadow:0 0 3px rgba(0,0,0,0.25);"></div>
<div class="r" style="left:1355px;top:660px;width:565px;height:37px;background:#fafafa;border-radius:10px 10px 0 0;"></div>
<div class="r" style="left:1355px;top:696px;width:600px;height:1px;background:#d8d8d8;"></div>
<svg class="r" style="left:1895px;top:671px;" width="14" height="14" viewBox="0 0 14 14"><path d="M2.5 2.5 L11.5 11.5 M11.5 2.5 L2.5 11.5" stroke="#555" stroke-width="1.2"/></svg>
<div class="r" style="left:1355px;top:697px;width:600px;height:23px;background:#eeeeee;"></div>
<div class="t" style="left:1361.00px;top:699.50px;font-size:13px;line-height:16px;color:#333;font-weight:700;letter-spacing:0.363px;">Edit</div>
<div class="r" style="left:1355px;top:719px;width:600px;height:1px;background:#d0d0d0;"></div>
<div class="r" style="left:1358px;top:722px;width:68px;height:21px;background:#d8e6f4;border:1px solid #9aa8b8;border-bottom:none;box-sizing:border-box;border-radius:2px 2px 0 0;"></div>
<div class="t" style="left:1368.50px;top:725.50px;font-size:13px;line-height:16px;color:#333;font-weight:700;letter-spacing:-0.612px;">Console</div>
<div class="r" style="left:1426px;top:723px;width:41px;height:20px;background:#ececec;border:1px solid #a8a8a8;border-bottom:none;box-sizing:border-box;"></div>
<div class="t" style="left:1435.00px;top:725.50px;font-size:13px;line-height:16px;color:#333;font-weight:700;letter-spacing:-0.604px;">Log</div>
<div class="r" style="left:1356px;top:742px;width:560px;height:403px;background:#ffffff;border:1px solid #8ea6c8;border-top:2px solid #9aaac4;box-sizing:border-box;"></div>
<div class="r" style="left:1357px;top:746px;width:543px;height:397px;overflow:hidden;">
<div class="t" style="left:1.50px;top:-6.50px;font-size:11.65px;line-height:14px;color:#3a4560;font-family:'Liberation Mono', monospace;font-style:italic;">colormode</div>
<div class="t" style="left:1.50px;top:8.50px;font-size:11.65px;line-height:14px;color:#3a4560;font-family:'Liberation Mono', monospace;font-style:italic;">tpId=0 setupId=5: 1.0 of 1.0 &gt;&gt;&gt; 1.0 of 1.0</div>
<div class="t" style="left:1.50px;top:23.50px;font-size:11.65px;line-height:14px;color:#3a4560;font-family:'Liberation Mono', monospace;font-style:italic;">tpId=0 setupId=6: 1.0 of 1.0 &gt;&gt;&gt; 1.0 of 1.0</div>
<div class="t" style="left:1.50px;top:38.50px;font-size:11.65px;line-height:14px;color:#3a4560;font-family:'Liberation Mono', monospace;font-style:italic;">tpId=0 setupId=7: 1.0 of 1.0 &gt;&gt;&gt; 1.0 of 1.0</div>
<div class="t" style="left:1.50px;top:53.50px;font-size:11.65px;line-height:14px;color:#3a4560;font-family:'Liberation Mono', monospace;font-style:italic;">tpId=0 setupId=8: 1.0 of 1.0 &gt;&gt;&gt; 1.0 of 1.0</div>
<div class="t" style="left:1.50px;top:68.50px;font-size:11.65px;line-height:14px;color:#3a4560;font-family:'Liberation Mono', monospace;font-style:italic;">tpId=0 setupId=9: 1.0 of 1.0 &gt;&gt;&gt; 1.0 of 1.0</div>
<div class="t" style="left:1.50px;top:83.50px;font-size:11.65px;line-height:14px;color:#3a4560;font-family:'Liberation Mono', monospace;font-style:italic;">bounding box:[-217.0, 8148.0, -2668.0] -&gt; [663.0, 9994.0, -1763.0]</div>
<div class="t" style="left:1.50px;top:113.50px;font-size:11.65px;line-height:14px;color:#3a4560;font-family:'Liberation Mono', monospace;font-style:italic;">tpId=0 setupId=5</div>
<div class="t" style="left:1.50px;top:128.50px;font-size:11.65px;line-height:14px;color:#3a4560;font-family:'Liberation Mono', monospace;font-style:italic;">Calibration (transformed): (0.2757316443248314, 0.2757316443248314, 0.2757316443248314)</div>
<div class="t" style="left:1.50px;top:158.50px;font-size:11.65px;line-height:14px;color:#3a4560;font-family:'Liberation Mono', monospace;font-style:italic;">tpId=0 setupId=6</div>
<div class="t" style="left:1.50px;top:173.50px;font-size:11.65px;line-height:14px;color:#3a4560;font-family:'Liberation Mono', monospace;font-style:italic;">Calibration (transformed): (0.2767388394003385, 0.2758413642460698, 0.2747160738254171)</div>
<div class="t" style="left:1.50px;top:203.50px;font-size:11.65px;line-height:14px;color:#3a4560;font-family:'Liberation Mono', monospace;font-style:italic;">tpId=0 setupId=7</div>
<div class="t" style="left:1.50px;top:218.50px;font-size:11.65px;line-height:14px;color:#3a4560;font-family:'Liberation Mono', monospace;font-style:italic;">Calibration (transformed): (0.2767388394003385, 0.2758413642460698, 0.2747160738254171)</div>
<div class="t" style="left:1.50px;top:248.50px;font-size:11.65px;line-height:14px;color:#3a4560;font-family:'Liberation Mono', monospace;font-style:italic;">tpId=0 setupId=8</div>
<div class="t" style="left:1.50px;top:263.50px;font-size:11.65px;line-height:14px;color:#3a4560;font-family:'Liberation Mono', monospace;font-style:italic;">Calibration (transformed): (0.2767388394003385, 0.2758413642460698, 0.2747160738254171)</div>
<div class="t" style="left:1.50px;top:293.50px;font-size:11.65px;line-height:14px;color:#3a4560;font-family:'Liberation Mono', monospace;font-style:italic;">tpId=0 setupId=9</div>
<div class="t" style="left:1.50px;top:308.50px;font-size:11.65px;line-height:14px;color:#3a4560;font-family:'Liberation Mono', monospace;font-style:italic;">Calibration (transformed): (0.2767388394003385, 0.2758413642460698, 0.2747160738254171)</div>
<div class="t" style="left:1.50px;top:323.50px;font-size:11.65px;line-height:14px;color:#3a4560;font-family:'Liberation Mono', monospace;font-style:italic;">Image_Fusion.fuse</div>
<div class="t" style="left:1.50px;top:338.50px;font-size:11.65px;line-height:14px;color:#3a4560;font-family:'Liberation Mono', monospace;font-style:italic;">[0, 0, 0] -&gt; [880, 1846, 905], dimensions (881, 1847, 906)</div>
<div class="t" style="left:1.50px;top:353.50px;font-size:11.65px;line-height:14px;color:#3a4560;font-family:'Liberation Mono', monospace;font-style:italic;">[0, 0, 0] -&gt; [880, 1846, 905], dimensions (881, 1847, 906)</div>
<div class="t" style="left:1.50px;top:368.50px;font-size:11.65px;line-height:14px;color:#3a4560;font-family:'Liberation Mono', monospace;font-style:italic;">[-217, 8148, -2668] -&gt; [663, 9994, -1763], dimensions (881, 1847, 906)</div>
</div>
<div class="r" style="left:1900px;top:744px;width:16px;height:399px;background:#eeeeee;border-left:1px solid #c8c8c8;box-sizing:border-box;"></div>
<div class="r" style="left:1901px;top:745px;width:14px;height:18px;background:#e8e8e8;border:1px solid #b8b8b8;box-sizing:border-box;"></div>
<svg class="r" style="left:1901px;top:745px;" width="14" height="18" viewBox="0 0 14 18"><path d="M3 11 L7 6.5 L11 11 Z" fill="#222"/></svg>
<div class="r" style="left:1901px;top:1112px;width:14px;height:16px;background:#dfe8f2;border:1px solid #8ea6c8;box-sizing:border-box;"></div>
<svg class="r" style="left:1901px;top:1112px;" width="14" height="16" viewBox="0 0 14 16"><g stroke="#7a8aa0" stroke-width="0.8"><line x1="4" y1="6" x2="10" y2="6"/><line x1="4" y1="8" x2="10" y2="8"/><line x1="4" y1="10" x2="10" y2="10"/></g></svg>
<div class="r" style="left:1901px;top:1128px;width:14px;height:16px;background:#e8e8e8;border:1px solid #b8b8b8;box-sizing:border-box;"></div>
<svg class="r" style="left:1901px;top:1128px;" width="14" height="16" viewBox="0 0 14 16"><path d="M3 6 L7 10.5 L11 6 Z" fill="#222"/></svg>
<div class="r" style="left:1357px;top:1143px;width:543px;height:17px;background:#eeeeee;border-top:1px solid #c8c8c8;box-sizing:border-box;"></div>
<div class="r" style="left:1358px;top:1144px;width:15px;height:16px;background:#e8e8e8;border:1px solid #b8b8b8;box-sizing:border-box;"></div>
<svg class="r" style="left:1358px;top:1144px;" width="15" height="16" viewBox="0 0 15 16"><path d="M10 4 L5.5 8 L10 12 Z" fill="#222"/></svg>
<div class="r" style="left:1373px;top:1144px;width:265px;height:16px;background:linear-gradient(#e8f0f8,#d4e0ee);border:1px solid #8ea6c8;box-sizing:border-box;border-radius:2px;"></div>
<svg class="r" style="left:1500px;top:1144px;" width="14" height="16" viewBox="0 0 14 16"><g stroke="#7a8aa0" stroke-width="0.8"><line x1="4" y1="4" x2="4" y2="12"/><line x1="6.5" y1="4" x2="6.5" y2="12"/><line x1="9" y1="4" x2="9" y2="12"/></g></svg>
<div class="r" style="left:1885px;top:1144px;width:15px;height:16px;background:#e8e8e8;border:1px solid #b8b8b8;box-sizing:border-box;"></div>
<svg class="r" style="left:1885px;top:1144px;" width="15" height="16" viewBox="0 0 15 16"><path d="M5 4 L9.5 8 L5 12 Z" fill="#222"/></svg>
<div class="r" style="left:1900px;top:1143px;width:20px;height:19px;background:#eeeeee;"></div>
<div class="r" style="left:1311px;top:35px;width:609px;height:122px;background:#eeeeee;border-radius:10px 10px 0 0;overflow:hidden;box-shadow:0 0 3px rgba(0,0,0,0.3);"></div>
<div class="r" style="left:1311px;top:35px;width:609px;height:36px;background:#ececec;border-radius:10px 10px 0 0;"></div>
<div class="r" style="left:1311px;top:71px;width:609px;height:1px;background:#d4d4d4;"></div>
<div class="r" style="left:1919px;top:72px;width:1px;height:27px;background:#9a9a9a;"></div>
<div class="t" style="left:1539.50px;top:43.81px;font-size:17px;line-height:20px;color:#444;font-weight:700;letter-spacing:-0.320px;">(Fiji Is Just) ImageJ</div>
<div class="r" style="left:1889px;top:41px;width:24px;height:24px;background:#dedede;border-radius:12px;"></div>
<svg class="r" style="left:1894px;top:46px;" width="14" height="14" viewBox="0 0 14 14"><path d="M3 3 L11 11 M11 3 L3 11" stroke="#333" stroke-width="1.4"/></svg>
<div class="r" style="left:1585px;top:75px;width:59px;height:20px;background:linear-gradient(#c4c4c4,#cccccc);border:1px solid #b8b8b8;box-sizing:border-box;"></div>
<div class="t" style="left:1321.00px;top:77.30px;font-size:13px;line-height:16px;color:#111;letter-spacing:-0.238px;">File</div>
<div class="t" style="left:1362.00px;top:77.30px;font-size:13px;line-height:16px;color:#111;letter-spacing:-0.352px;">Edit</div>
<div class="t" style="left:1463.00px;top:77.30px;font-size:13px;line-height:16px;color:#111;letter-spacing:-0.424px;">Process</div>
<div class="t" style="left:1528.60px;top:77.30px;font-size:13px;line-height:16px;color:#111;letter-spacing:-0.324px;">Analyze</div>
<div class="t" style="left:1656.80px;top:77.30px;font-size:13px;line-height:16px;color:#111;letter-spacing:-0.208px;">Window</div>
<div class="t" style="left:1881.20px;top:77.30px;font-size:13px;line-height:16px;color:#111;letter-spacing:-0.188px;">Help</div>
<div class="t" style="left:1595.50px;top:77.30px;font-size:13px;line-height:16px;color:#111;letter-spacing:-0.522px;">Plugins</div>
<div class="t" style="left:1405.00px;top:77.30px;font-size:13px;line-height:16px;color:#111;letter-spacing:-0.319px;"><span style="font-family:'Liberation Serif',serif;font-weight:700;">I</span>mage</div>
<div class="r" style="left:1311px;top:99px;width:620px;height:31px;background:#eeeeee;"></div>
<div class="r" style="left:1312px;top:100px;width:29px;height:30px;background:#c2c2c2;border-top:1px solid #b0b0b0;border-left:1px solid #b0b0b0;box-sizing:border-box;"></div>
<div class="r" style="left:1343px;top:100px;width:29px;height:30px;background:#e9e9e9;border-right:1.5px solid #8c8c8c;border-bottom:1.5px solid #8c8c8c;border-top:1px solid #f8f8f8;border-left:1px solid #f8f8f8;box-sizing:border-box;"></div>
<div class="r" style="left:1373px;top:100px;width:29px;height:30px;background:#e9e9e9;border-right:1.5px solid #8c8c8c;border-bottom:1.5px solid #8c8c8c;border-top:1px solid #f8f8f8;border-left:1px solid #f8f8f8;box-sizing:border-box;"></div>
<div class="r" style="left:1403px;top:100px;width:29px;height:30px;background:#e9e9e9;border-right:1.5px solid #8c8c8c;border-bottom:1.5px solid #8c8c8c;border-top:1px solid #f8f8f8;border-left:1px solid #f8f8f8;box-sizing:border-box;"></div>
<div class="r" style="left:1433px;top:100px;width:29px;height:30px;background:#e9e9e9;border-right:1.5px solid #8c8c8c;border-bottom:1.5px solid #8c8c8c;border-top:1px solid #f8f8f8;border-left:1px solid #f8f8f8;box-sizing:border-box;"></div>
<div class="r" style="left:1463px;top:100px;width:29px;height:30px;background:#e9e9e9;border-right:1.5px solid #8c8c8c;border-bottom:1.5px solid #8c8c8c;border-top:1px solid #f8f8f8;border-left:1px solid #f8f8f8;box-sizing:border-box;"></div>
<div class="r" style="left:1493px;top:100px;width:29px;height:30px;background:#e9e9e9;border-right:1.5px solid #8c8c8c;border-bottom:1.5px solid #8c8c8c;border-top:1px solid #f8f8f8;border-left:1px solid #f8f8f8;box-sizing:border-box;"></div>
<div class="r" style="left:1523px;top:100px;width:29px;height:30px;background:#e9e9e9;border-right:1.5px solid #8c8c8c;border-bottom:1.5px solid #8c8c8c;border-top:1px solid #f8f8f8;border-left:1px solid #f8f8f8;box-sizing:border-box;"></div>
<div class="r" style="left:1553px;top:100px;width:29px;height:30px;background:#e9e9e9;border-right:1.5px solid #8c8c8c;border-bottom:1.5px solid #8c8c8c;border-top:1px solid #f8f8f8;border-left:1px solid #f8f8f8;box-sizing:border-box;"></div>
<svg class="r" style="left:1312px;top:100px;" width="29" height="29" viewBox="0 0 29 29"><defs><linearGradient id="rg" x1="0" y1="0" x2="0" y2="1"><stop offset="0" stop-color="#c4c8cc"/><stop offset="1" stop-color="#d4ccc4"/></linearGradient></defs><rect x="6.4" y="8.4" width="17.1" height="12.9" fill="url(#rg)" stroke="#13244a" stroke-width="1.2"/><path d="M23.3 23 L28 23 L25.6 25.6 Z" fill="#9a0a1a"/></svg>
<svg class="r" style="left:1343px;top:100px;" width="29" height="29" viewBox="0 0 29 29"><ellipse cx="13.75" cy="13.8" rx="8.75" ry="6.7" fill="#e4e6e8" stroke="#13244a" stroke-width="1.1"/><path d="M21.5 22 L26 22 L23.75 24.4 Z" fill="#9a0a1a"/></svg>
<svg class="r" style="left:1373px;top:100px;" width="29" height="29" viewBox="0 0 29 29"><path d="M6.25 20.5 V13.4 L10.4 8.4 H21.7 L17.5 13.8 L20.8 20.5 Z" fill="none" stroke="#111" stroke-width="1.1"/></svg>
<svg class="r" style="left:1403px;top:100px;" width="29" height="29" viewBox="0 0 29 29"><path d="M13.75 12.6 C12 10 10 8.8 8 8.8 C5.5 8.8 5 11 5 13 C5 17.5 9 20.5 13.75 20.5 C18.5 20.5 22.9 17.5 22.9 13 C22.9 11 22 8.8 19.5 8.8 C17.5 8.8 15.5 10 13.75 12.6 Z" fill="#e6e8ea" stroke="#13244a" stroke-width="1.1"/></svg>
<svg class="r" style="left:1433px;top:100px;" width="29" height="29" viewBox="0 0 29 29"><line x1="5" y1="22.2" x2="22.1" y2="5.9" stroke="#111" stroke-width="1"/><circle cx="5" cy="22.2" r="1.2" fill="#111"/><circle cx="22.1" cy="5.9" r="1.2" fill="#111"/><path d="M20.2 22 L24.7 22 L22.45 24.4 Z" fill="#9a0a1a"/></svg>
<svg class="r" style="left:1463px;top:100px;" width="29" height="29" viewBox="0 0 29 29"><path d="M4.9 20.3 H22.4 M4.9 20.3 L19.1 7.8" fill="none" stroke="#111" stroke-width="1.1"/><path d="M14.2 15 Q16 17 15.4 20.3" fill="none" stroke="#111" stroke-width="0.9"/><circle cx="19.1" cy="7.8" r="1.1" fill="#111"/><circle cx="22.4" cy="20.1" r="1" fill="#111"/></svg>
<svg class="r" style="left:1493px;top:100px;" width="29" height="29" viewBox="0 0 29 29"><path d="M3.3 9.7 H9.899999999999999 M6.6 6.3999999999999995 V13.0" stroke="#13244a" stroke-width="1.1"/><rect x="5.699999999999999" y="8.799999999999999" width="1.8" height="1.8" fill="#dde"/><path d="M11.2 5.9 H17.8 M14.5 2.6000000000000005 V9.2" stroke="#13244a" stroke-width="1.1"/><rect x="13.6" y="5.0" width="1.8" height="1.8" fill="#ee0"/><path d="M17.45 11.3 H24.05 M20.75 8.0 V14.600000000000001" stroke="#13244a" stroke-width="1.1"/><rect x="19.85" y="10.4" width="1.8" height="1.8" fill="#dde"/><path d="M4.1000000000000005 19.25 H10.7 M7.4 15.95 V22.55" stroke="#13244a" stroke-width="1.1"/><rect x="6.5" y="18.35" width="1.8" height="1.8" fill="#ee0"/><path d="M12.0 17.6 H18.6 M15.3 14.3 V20.900000000000002" stroke="#13244a" stroke-width="1.1"/><rect x="14.4" y="16.700000000000003" width="1.8" height="1.8" fill="#ee0"/><path d="M21.5 22.4 L26 22.4 L23.75 24.8 Z" fill="#9a0a1a"/></svg>
<svg class="r" style="left:1523px;top:100px;" width="29" height="29" viewBox="0 0 29 29"><line x1="9.3" y1="9.25" x2="22.8" y2="22.8" stroke="#111" stroke-width="1"/><path d="M7 7 L11.6 11.5 M11.6 7 L7 11.5" stroke="#3050c0" stroke-width="1.4"/><circle cx="9.3" cy="9.25" r="1.4" fill="#ee0"/></svg>
<svg class="r" style="left:1553px;top:100px;" width="29" height="29" viewBox="0 0 29 29"><path d="M5.3 22.6 L14.3 5.9 L22.8 22.6 M9.5 15 H19.1 M3.5 22.6 H7 M21 22.6 H24.5" fill="none" stroke="#111" stroke-width="1.1"/></svg>
<div class="t" style="left:1311.50px;top:134.50px;font-size:13px;line-height:16px;color:#3a4660;letter-spacing:0.105px;">Scrolling tool (or press space bar and drag)</div>
<div class="r" style="left:1897px;top:100px;width:23px;height:30px;background:#e2e2e2;border-bottom:1.5px solid #8c8c8c;box-sizing:border-box;"></div>
<svg class="r" style="left:1897px;top:104px;" width="23" height="18" viewBox="0 0 23 18"><path d="M3 3.5 L10 9 L3 14.5 M9 3.5 L16 9 L9 14.5" fill="none" stroke="#a01820" stroke-width="1.5"/></svg>
<div class="r" style="left:1900px;top:134px;width:20px;height:20px;background:#eaf0f6;border:1px solid #8ea0b8;box-sizing:border-box;"></div>
<div class="r" style="left:1316px;top:191px;width:149px;height:344px;background:#eeeeee;border-radius:10px 10px 0 0;overflow:hidden;box-shadow:0 0 3px rgba(0,0,0,0.3);"></div>
<div class="r" style="left:1316px;top:191px;width:149px;height:36px;background:#f7f7f7;border-radius:10px 10px 0 0;"></div>
<div class="r" style="left:1316px;top:227px;width:149px;height:1px;background:#dcdcdc;"></div>
<div class="t" style="left:1364.00px;top:200.96px;font-size:16px;line-height:19px;color:#a8a8a8;font-weight:700;letter-spacing:-0.896px;">B&amp;C</div>
<svg class="r" style="left:1440px;top:202px;" width="14" height="14" viewBox="0 0 14 14"><path d="M3 3 L11 11 M11 3 L3 11" stroke="#555" stroke-width="1.2"/></svg>
<div class="r" style="left:1326px;top:238px;width:129px;height:65px;background:#fff;border:1.5px solid #111;box-sizing:border-box;"></div>
<svg class="r" style="left:1326px;top:238px;" width="129" height="65" viewBox="0 0 129 65"><path d="M1.5 64 L1.5 35.5 C3 44 4 48 5 50.5 C7 54 8 56 9.5 58 C12 61 14 62 16.3 62.8 L32 63.4 C35 62.5 37 61.8 38.8 61 C41 59 42.5 56 44 54.3 C45.5 52.8 47 52.2 48.5 52 L55.3 50.9 L56.4 49 L57.5 49.8 L58.6 47.9 L60.1 49 C60.8 51 61.3 53 62 55 C63 56.5 64 57.2 65 58 C66.5 60 68 61.5 69.5 62.5 C72 63.3 76 63.5 81.5 63.7 L81.5 64 Z" fill="#8a8a8a"/><line x1="1.5" y1="63.5" x2="127.5" y2="1.5" stroke="#111" stroke-width="1.2"/><rect x="0.75" y="0.75" width="127.5" height="63.5" fill="none" stroke="#111" stroke-width="1.5"/></svg>
<div class="t" style="left:1328.00px;top:305.54px;font-size:13px;line-height:16px;color:#111;font-family:'Liberation Mono', monospace;letter-spacing:-0.797px;">190</div>
<div class="t" style="left:1425.00px;top:305.54px;font-size:13px;line-height:16px;color:#111;font-family:'Liberation Mono', monospace;letter-spacing:-0.797px;">2380</div>
<div class="r" style="left:1326px;top:325px;width:129px;height:16px;background:#cccccc;border-top:1.5px solid #9a9a9a;border-left:1px solid #9a9a9a;box-sizing:border-box;"></div>
<svg class="r" style="left:1327px;top:326.5px;" width="15" height="14.5" viewBox="0 0 15 14.5"><rect width="15" height="14.5" fill="#d6d6d6"/><path d="M1 7 L14 0.5 V13.8 Z" fill="#eaeaea"/><path d="M1 7 L14 13.8" stroke="#777" stroke-width="0.8"/><path d="M14 0.5 V14" stroke="#8a8a8a" stroke-width="0.8"/></svg>
<svg class="r" style="left:1440px;top:326.5px;" width="15" height="14.5" viewBox="0 0 15 14.5"><rect width="15" height="14.5" fill="#d6d6d6"/><path d="M14 7 L1 0.5 V13.8 Z" fill="#eaeaea"/><path d="M14 7 L1 13.8" stroke="#777" stroke-width="0.8"/></svg>
<div class="r" style="left:1342px;top:326.5px;width:6px;height:14.5px;background:#e6e6e6;border-right:1px solid #7a7a7a;border-bottom:1px solid #7a7a7a;box-sizing:border-box;"></div>
<div class="t" style="left:1367.50px;top:342.50px;font-size:13px;line-height:16px;color:#111;letter-spacing:-0.105px;">Minimum</div>
<div class="r" style="left:1326px;top:361px;width:129px;height:16px;background:#cccccc;border-top:1.5px solid #9a9a9a;border-left:1px solid #9a9a9a;box-sizing:border-box;"></div>
<svg class="r" style="left:1327px;top:362.5px;" width="15" height="14.5" viewBox="0 0 15 14.5"><rect width="15" height="14.5" fill="#d6d6d6"/><path d="M1 7 L14 0.5 V13.8 Z" fill="#eaeaea"/><path d="M1 7 L14 13.8" stroke="#777" stroke-width="0.8"/><path d="M14 0.5 V14" stroke="#8a8a8a" stroke-width="0.8"/></svg>
<svg class="r" style="left:1440px;top:362.5px;" width="15" height="14.5" viewBox="0 0 15 14.5"><rect width="15" height="14.5" fill="#d6d6d6"/><path d="M14 7 L1 0.5 V13.8 Z" fill="#eaeaea"/><path d="M14 7 L1 13.8" stroke="#777" stroke-width="0.8"/></svg>
<div class="r" style="left:1433px;top:362.5px;width:6px;height:14.5px;background:#e6e6e6;border-right:1px solid #7a7a7a;border-bottom:1px solid #7a7a7a;box-sizing:border-box;"></div>
<div class="t" style="left:1366.00px;top:378.50px;font-size:13px;line-height:16px;color:#111;letter-spacing:-0.192px;">Maximum</div>
<div class="r" style="left:1326px;top:397px;width:129px;height:16px;background:#cccccc;border-top:1.5px solid #9a9a9a;border-left:1px solid #9a9a9a;box-sizing:border-box;"></div>
<svg class="r" style="left:1327px;top:398.5px;" width="15" height="14.5" viewBox="0 0 15 14.5"><rect width="15" height="14.5" fill="#d6d6d6"/><path d="M1 7 L14 0.5 V13.8 Z" fill="#eaeaea"/><path d="M1 7 L14 13.8" stroke="#777" stroke-width="0.8"/><path d="M14 0.5 V14" stroke="#8a8a8a" stroke-width="0.8"/></svg>
<svg class="r" style="left:1440px;top:398.5px;" width="15" height="14.5" viewBox="0 0 15 14.5"><rect width="15" height="14.5" fill="#d6d6d6"/><path d="M14 7 L1 0.5 V13.8 Z" fill="#eaeaea"/><path d="M14 7 L1 13.8" stroke="#777" stroke-width="0.8"/></svg>
<div class="r" style="left:1388px;top:398.5px;width:6px;height:14.5px;background:#e6e6e6;border-right:1px solid #7a7a7a;border-bottom:1px solid #7a7a7a;box-sizing:border-box;"></div>
<div class="t" style="left:1364.00px;top:414.50px;font-size:13px;line-height:16px;color:#111;letter-spacing:-0.244px;">Brightness</div>
<div class="r" style="left:1326px;top:433px;width:129px;height:16px;background:#cccccc;border-top:1.5px solid #9a9a9a;border-left:1px solid #9a9a9a;box-sizing:border-box;"></div>
<svg class="r" style="left:1327px;top:434.5px;" width="15" height="14.5" viewBox="0 0 15 14.5"><rect width="15" height="14.5" fill="#d6d6d6"/><path d="M1 7 L14 0.5 V13.8 Z" fill="#eaeaea"/><path d="M1 7 L14 13.8" stroke="#777" stroke-width="0.8"/><path d="M14 0.5 V14" stroke="#8a8a8a" stroke-width="0.8"/></svg>
<svg class="r" style="left:1440px;top:434.5px;" width="15" height="14.5" viewBox="0 0 15 14.5"><rect width="15" height="14.5" fill="#d6d6d6"/><path d="M14 7 L1 0.5 V13.8 Z" fill="#eaeaea"/><path d="M14 7 L1 13.8" stroke="#777" stroke-width="0.8"/></svg>
<div class="r" style="left:1388px;top:434.5px;width:6px;height:14.5px;background:#e6e6e6;border-right:1px solid #7a7a7a;border-bottom:1px solid #7a7a7a;box-sizing:border-box;"></div>
<div class="t" style="left:1369.50px;top:450.50px;font-size:13px;line-height:16px;color:#111;letter-spacing:-0.143px;">Contrast</div>
<div class="r" style="left:1324px;top:478px;width:64px;height:20px;background:linear-gradient(#f4f4f4,#e6e6e6);border:1px solid #b4b4b4;box-sizing:border-box;"></div>
<div class="t" style="left:1342.00px;top:480.10px;font-size:13px;line-height:16px;color:#111;letter-spacing:0.312px;">Auto</div>
<div class="r" style="left:1393px;top:478px;width:64px;height:20px;background:linear-gradient(#f4f4f4,#e6e6e6);border:1px solid #b4b4b4;box-sizing:border-box;"></div>
<div class="t" style="left:1409.00px;top:480.10px;font-size:13px;line-height:16px;color:#111;letter-spacing:-0.394px;">Reset</div>
<div class="r" style="left:1324px;top:503px;width:64px;height:20px;background:linear-gradient(#f4f4f4,#e6e6e6);border:1px solid #b4b4b4;box-sizing:border-box;"></div>
<div class="t" style="left:1346.00px;top:505.10px;font-size:13px;line-height:16px;color:#111;letter-spacing:0.161px;">Set</div>
<div class="r" style="left:1393px;top:503px;width:64px;height:20px;background:linear-gradient(#f4f4f4,#e6e6e6);border:1px solid #b4b4b4;box-sizing:border-box;"></div>
<div class="t" style="left:1408.50px;top:505.10px;font-size:13px;line-height:16px;color:#111;letter-spacing:0.094px;">Apply</div>
<div class="r" style="left:1486px;top:191px;width:140px;height:174px;background:#eeeeee;border-radius:10px 0 0 0;overflow:hidden;box-shadow:0 0 3px rgba(0,0,0,0.3);"></div>
<div class="r" style="left:1486px;top:191px;width:140px;height:36px;background:#f7f7f7;border-radius:10px 0 0 0;"></div>
<div class="r" style="left:1486px;top:227px;width:140px;height:1px;background:#dcdcdc;"></div>
<div class="t" style="left:1540.00px;top:200.96px;font-size:16px;line-height:19px;color:#a8a8a8;font-weight:700;">Channels</div>
<div class="r" style="left:1520px;top:240px;width:80px;height:21px;background:linear-gradient(#f4f4f4,#e6e6e6);border:1px solid #b4b4b4;box-sizing:border-box;"></div>
<div class="t" style="left:1523.00px;top:242.50px;font-size:13px;line-height:16px;color:#111;letter-spacing:-0.240px;">Composite</div>
<div class="r" style="left:1515px;top:278px;width:11px;height:11px;background:#fff;border:1px solid #888;box-sizing:border-box;"></div>
<svg class="r" style="left:1513px;top:275px;" width="15" height="15" viewBox="0 0 15 15"><path d="M3 8 L6 12 L13 2" fill="none" stroke="#111" stroke-width="2"/></svg>
<div class="t" style="left:1561.00px;top:276.00px;font-size:13px;line-height:16px;color:#111;">Channel 1</div>
<div class="r" style="left:1515px;top:303px;width:11px;height:11px;background:#fff;border:1px solid #888;box-sizing:border-box;"></div>
<svg class="r" style="left:1513px;top:300px;" width="15" height="15" viewBox="0 0 15 15"><path d="M3 8 L6 12 L13 2" fill="none" stroke="#111" stroke-width="2"/></svg>
<div class="t" style="left:1561.00px;top:301.00px;font-size:13px;line-height:16px;color:#111;">Channel 1</div>
<div class="r" style="left:1533px;top:334px;width:36px;height:20px;background:linear-gradient(#f4f4f4,#e6e6e6);border:1px solid #b4b4b4;box-sizing:border-box;"></div>
<div class="t" style="left:1538.50px;top:336.10px;font-size:13px;line-height:16px;color:#111;letter-spacing:-0.438px;">Help</div>
<div class="r" style="left:1578px;top:334px;width:40px;height:20px;background:linear-gradient(#f4f4f4,#e6e6e6);border:1px solid #b4b4b4;box-sizing:border-box;"></div>
<div class="t" style="left:1583.00px;top:336.10px;font-size:13px;line-height:16px;color:#111;letter-spacing:0.094px;">More</div>
<div class="r" style="left:1585px;top:96px;width:313px;height:945px;background:#eeeeee;border:1px solid #c4c4c4;box-sizing:border-box;box-shadow:1px 2px 4px rgba(0,0,0,0.25);"></div>
<svg class="r" style="left:1880px;top:101px;" width="14" height="14" viewBox="0 0 14 14"><path d="M1.5 1.5 V12.5 M1.5 1.5 L12.5 7" stroke="#f8f8f8" stroke-width="0.9" fill="none"/><path d="M1.5 12.5 L12.5 7" stroke="#a8a8a8" stroke-width="0.9"/></svg>
<div class="t" style="left:1589.70px;top:100.90px;font-size:13px;line-height:16px;color:#111;letter-spacing:-0.320px;">Macros</div>
<svg class="r" style="left:1880px;top:122px;" width="14" height="14" viewBox="0 0 14 14"><path d="M1.5 1.5 V12.5 M1.5 1.5 L12.5 7" stroke="#f8f8f8" stroke-width="0.9" fill="none"/><path d="M1.5 12.5 L12.5 7" stroke="#a8a8a8" stroke-width="0.9"/></svg>
<div class="t" style="left:1589.70px;top:121.90px;font-size:13px;line-height:16px;color:#111;letter-spacing:-0.275px;">Shortcuts</div>
<svg class="r" style="left:1880px;top:143px;" width="14" height="14" viewBox="0 0 14 14"><path d="M1.5 1.5 V12.5 M1.5 1.5 L12.5 7" stroke="#f8f8f8" stroke-width="0.9" fill="none"/><path d="M1.5 12.5 L12.5 7" stroke="#a8a8a8" stroke-width="0.9"/></svg>
<div class="t" style="left:1589.70px;top:142.90px;font-size:13px;line-height:16px;color:#111;letter-spacing:-0.210px;">Utilities</div>
<svg class="r" style="left:1880px;top:164px;" width="14" height="14" viewBox="0 0 14 14"><path d="M1.5 1.5 V12.5 M1.5 1.5 L12.5 7" stroke="#f8f8f8" stroke-width="0.9" fill="none"/><path d="M1.5 12.5 L12.5 7" stroke="#a8a8a8" stroke-width="0.9"/></svg>
<div class="t" style="left:1589.70px;top:163.90px;font-size:13px;line-height:16px;color:#111;letter-spacing:-0.390px;">New</div>
<div class="t" style="left:1589.70px;top:184.90px;font-size:13px;line-height:16px;color:#111;letter-spacing:-0.278px;">Compile and Run...</div>
<div class="t" style="left:1589.70px;top:205.90px;font-size:13px;line-height:16px;color:#111;letter-spacing:-0.208px;"><span style="font-family:'Liberation Serif',serif;font-weight:700;">I</span>nstall...</div>
<div class="t" style="left:1589.70px;top:226.90px;font-size:13px;line-height:16px;color:#111;letter-spacing:-0.233px;"><span style="font-family:'Liberation Serif',serif;font-weight:700;">I</span>nstall Plug<span style="font-family:'Liberation Serif',serif;font-weight:700;">I</span>n...</div>
<div class="t" style="left:1589.70px;top:257.20px;font-size:13px;line-height:16px;color:#111;letter-spacing:-0.299px;">3D Viewer</div>
<svg class="r" style="left:1880px;top:279px;" width="14" height="14" viewBox="0 0 14 14"><path d="M1.5 1.5 V12.5 M1.5 1.5 L12.5 7" stroke="#f8f8f8" stroke-width="0.9" fill="none"/><path d="M1.5 12.5 L12.5 7" stroke="#a8a8a8" stroke-width="0.9"/></svg>
<div class="t" style="left:1589.70px;top:278.20px;font-size:13px;line-height:16px;color:#111;letter-spacing:-0.297px;">Analyze</div>
<svg class="r" style="left:1880px;top:300px;" width="14" height="14" viewBox="0 0 14 14"><path d="M1.5 1.5 V12.5 M1.5 1.5 L12.5 7" stroke="#f8f8f8" stroke-width="0.9" fill="none"/><path d="M1.5 12.5 L12.5 7" stroke="#a8a8a8" stroke-width="0.9"/></svg>
<div class="t" style="left:1589.70px;top:299.20px;font-size:13px;line-height:16px;color:#111;letter-spacing:-0.304px;">B<span style="font-family:'Liberation Serif',serif;font-weight:700;">I</span>J</div>
<svg class="r" style="left:1880px;top:321px;" width="14" height="14" viewBox="0 0 14 14"><path d="M1.5 1.5 V12.5 M1.5 1.5 L12.5 7" stroke="#f8f8f8" stroke-width="0.9" fill="none"/><path d="M1.5 12.5 L12.5 7" stroke="#a8a8a8" stroke-width="0.9"/></svg>
<div class="t" style="left:1589.70px;top:320.20px;font-size:13px;line-height:16px;color:#111;letter-spacing:-0.297px;">BigDataViewer</div>
<div class="r" style="left:1587px;top:338px;width:309px;height:20px;background:#c8c8c8;border:1px solid #b4b4b4;box-sizing:border-box;"></div>
<svg class="r" style="left:1880px;top:342px;" width="14" height="14" viewBox="0 0 14 14"><path d="M2 1.5 L12.5 7 L2 12.5 Z" fill="#dcdcdc" stroke="#b8b8b8" stroke-width="0.8"/></svg>
<div class="t" style="left:1589.70px;top:341.20px;font-size:13px;line-height:16px;color:#111;letter-spacing:-0.257px;">BigStitcher</div>
<svg class="r" style="left:1880px;top:363px;" width="14" height="14" viewBox="0 0 14 14"><path d="M1.5 1.5 V12.5 M1.5 1.5 L12.5 7" stroke="#f8f8f8" stroke-width="0.9" fill="none"/><path d="M1.5 12.5 L12.5 7" stroke="#a8a8a8" stroke-width="0.9"/></svg>
<div class="t" style="left:1589.70px;top:362.20px;font-size:13px;line-height:16px;color:#111;letter-spacing:-0.290px;">Bio-Formats</div>
<svg class="r" style="left:1880px;top:384px;" width="14" height="14" viewBox="0 0 14 14"><path d="M1.5 1.5 V12.5 M1.5 1.5 L12.5 7" stroke="#f8f8f8" stroke-width="0.9" fill="none"/><path d="M1.5 12.5 L12.5 7" stroke="#a8a8a8" stroke-width="0.9"/></svg>
<div class="t" style="left:1589.70px;top:383.20px;font-size:13px;line-height:16px;color:#111;letter-spacing:-0.266px;">Feature Extraction</div>
<svg class="r" style="left:1880px;top:405px;" width="14" height="14" viewBox="0 0 14 14"><path d="M1.5 1.5 V12.5 M1.5 1.5 L12.5 7" stroke="#f8f8f8" stroke-width="0.9" fill="none"/><path d="M1.5 12.5 L12.5 7" stroke="#a8a8a8" stroke-width="0.9"/></svg>
<div class="t" style="left:1589.70px;top:404.20px;font-size:13px;line-height:16px;color:#111;letter-spacing:-0.257px;">Fiji Cube</div>
<svg class="r" style="left:1880px;top:426px;" width="14" height="14" viewBox="0 0 14 14"><path d="M1.5 1.5 V12.5 M1.5 1.5 L12.5 7" stroke="#f8f8f8" stroke-width="0.9" fill="none"/><path d="M1.5 12.5 L12.5 7" stroke="#a8a8a8" stroke-width="0.9"/></svg>
<div class="t" style="left:1589.70px;top:425.20px;font-size:13px;line-height:16px;color:#111;letter-spacing:-0.325px;">Graph</div>
<svg class="r" style="left:1880px;top:447px;" width="14" height="14" viewBox="0 0 14 14"><path d="M1.5 1.5 V12.5 M1.5 1.5 L12.5 7" stroke="#f8f8f8" stroke-width="0.9" fill="none"/><path d="M1.5 12.5 L12.5 7" stroke="#a8a8a8" stroke-width="0.9"/></svg>
<div class="t" style="left:1589.70px;top:446.20px;font-size:13px;line-height:16px;color:#111;letter-spacing:-0.276px;">Grid</div>
<svg class="r" style="left:1880px;top:468px;" width="14" height="14" viewBox="0 0 14 14"><path d="M1.5 1.5 V12.5 M1.5 1.5 L12.5 7" stroke="#f8f8f8" stroke-width="0.9" fill="none"/><path d="M1.5 12.5 L12.5 7" stroke="#a8a8a8" stroke-width="0.9"/></svg>
<div class="t" style="left:1589.70px;top:467.20px;font-size:13px;line-height:16px;color:#111;letter-spacing:-0.301px;">Grouping</div>
<svg class="r" style="left:1880px;top:489px;" width="14" height="14" viewBox="0 0 14 14"><path d="M1.5 1.5 V12.5 M1.5 1.5 L12.5 7" stroke="#f8f8f8" stroke-width="0.9" fill="none"/><path d="M1.5 12.5 L12.5 7" stroke="#a8a8a8" stroke-width="0.9"/></svg>
<div class="t" style="left:1589.70px;top:488.20px;font-size:13px;line-height:16px;color:#111;letter-spacing:-0.382px;">HDF5</div>
<svg class="r" style="left:1880px;top:510px;" width="14" height="14" viewBox="0 0 14 14"><path d="M1.5 1.5 V12.5 M1.5 1.5 L12.5 7" stroke="#f8f8f8" stroke-width="0.9" fill="none"/><path d="M1.5 12.5 L12.5 7" stroke="#a8a8a8" stroke-width="0.9"/></svg>
<div class="t" style="left:1589.70px;top:509.20px;font-size:13px;line-height:16px;color:#111;letter-spacing:-0.349px;"><span style="font-family:'Liberation Serif',serif;font-weight:700;">I</span>mage5D</div>
<svg class="r" style="left:1880px;top:531px;" width="14" height="14" viewBox="0 0 14 14"><path d="M1.5 1.5 V12.5 M1.5 1.5 L12.5 7" stroke="#f8f8f8" stroke-width="0.9" fill="none"/><path d="M1.5 12.5 L12.5 7" stroke="#a8a8a8" stroke-width="0.9"/></svg>
<div class="t" style="left:1589.70px;top:530.20px;font-size:13px;line-height:16px;color:#111;letter-spacing:-0.256px;"><span style="font-family:'Liberation Serif',serif;font-weight:700;">I</span>ntegral <span style="font-family:'Liberation Serif',serif;font-weight:700;">I</span>mage Filters</div>
<svg class="r" style="left:1880px;top:552px;" width="14" height="14" viewBox="0 0 14 14"><path d="M1.5 1.5 V12.5 M1.5 1.5 L12.5 7" stroke="#f8f8f8" stroke-width="0.9" fill="none"/><path d="M1.5 12.5 L12.5 7" stroke="#a8a8a8" stroke-width="0.9"/></svg>
<div class="t" style="left:1589.70px;top:551.20px;font-size:13px;line-height:16px;color:#111;letter-spacing:-0.307px;">LSM Toolbox</div>
<svg class="r" style="left:1880px;top:573px;" width="14" height="14" viewBox="0 0 14 14"><path d="M1.5 1.5 V12.5 M1.5 1.5 L12.5 7" stroke="#f8f8f8" stroke-width="0.9" fill="none"/><path d="M1.5 12.5 L12.5 7" stroke="#a8a8a8" stroke-width="0.9"/></svg>
<div class="t" style="left:1589.70px;top:572.20px;font-size:13px;line-height:16px;color:#111;letter-spacing:-0.322px;">Landmarks</div>
<svg class="r" style="left:1880px;top:594px;" width="14" height="14" viewBox="0 0 14 14"><path d="M1.5 1.5 V12.5 M1.5 1.5 L12.5 7" stroke="#f8f8f8" stroke-width="0.9" fill="none"/><path d="M1.5 12.5 L12.5 7" stroke="#a8a8a8" stroke-width="0.9"/></svg>
<div class="t" style="left:1589.70px;top:593.20px;font-size:13px;line-height:16px;color:#111;letter-spacing:-0.276px;">Optic Flow</div>
<svg class="r" style="left:1880px;top:615px;" width="14" height="14" viewBox="0 0 14 14"><path d="M1.5 1.5 V12.5 M1.5 1.5 L12.5 7" stroke="#f8f8f8" stroke-width="0.9" fill="none"/><path d="M1.5 12.5 L12.5 7" stroke="#a8a8a8" stroke-width="0.9"/></svg>
<div class="t" style="left:1589.70px;top:614.20px;font-size:13px;line-height:16px;color:#111;letter-spacing:-0.302px;">Process</div>
<svg class="r" style="left:1880px;top:636px;" width="14" height="14" viewBox="0 0 14 14"><path d="M1.5 1.5 V12.5 M1.5 1.5 L12.5 7" stroke="#f8f8f8" stroke-width="0.9" fill="none"/><path d="M1.5 12.5 L12.5 7" stroke="#a8a8a8" stroke-width="0.9"/></svg>
<div class="t" style="left:1589.70px;top:635.20px;font-size:13px;line-height:16px;color:#111;letter-spacing:-0.260px;">Registration</div>
<div class="t" style="left:1589.70px;top:656.20px;font-size:13px;line-height:16px;color:#111;letter-spacing:-0.278px;">Ridge Detection</div>
<svg class="r" style="left:1880px;top:678px;" width="14" height="14" viewBox="0 0 14 14"><path d="M1.5 1.5 V12.5 M1.5 1.5 L12.5 7" stroke="#f8f8f8" stroke-width="0.9" fill="none"/><path d="M1.5 12.5 L12.5 7" stroke="#a8a8a8" stroke-width="0.9"/></svg>
<div class="t" style="left:1589.70px;top:677.20px;font-size:13px;line-height:16px;color:#111;letter-spacing:-0.301px;">Segmentation</div>
<svg class="r" style="left:1880px;top:699px;" width="14" height="14" viewBox="0 0 14 14"><path d="M1.5 1.5 V12.5 M1.5 1.5 L12.5 7" stroke="#f8f8f8" stroke-width="0.9" fill="none"/><path d="M1.5 12.5 L12.5 7" stroke="#a8a8a8" stroke-width="0.9"/></svg>
<div class="t" style="left:1589.70px;top:698.20px;font-size:13px;line-height:16px;color:#111;letter-spacing:-0.285px;">Skeleton</div>
<svg class="r" style="left:1880px;top:720px;" width="14" height="14" viewBox="0 0 14 14"><path d="M1.5 1.5 V12.5 M1.5 1.5 L12.5 7" stroke="#f8f8f8" stroke-width="0.9" fill="none"/><path d="M1.5 12.5 L12.5 7" stroke="#a8a8a8" stroke-width="0.9"/></svg>
<div class="t" style="left:1589.70px;top:719.20px;font-size:13px;line-height:16px;color:#111;letter-spacing:-0.293px;">Stacks</div>
<svg class="r" style="left:1880px;top:741px;" width="14" height="14" viewBox="0 0 14 14"><path d="M1.5 1.5 V12.5 M1.5 1.5 L12.5 7" stroke="#f8f8f8" stroke-width="0.9" fill="none"/><path d="M1.5 12.5 L12.5 7" stroke="#a8a8a8" stroke-width="0.9"/></svg>
<div class="t" style="left:1589.70px;top:740.20px;font-size:13px;line-height:16px;color:#111;letter-spacing:-0.249px;">Stitching</div>
<svg class="r" style="left:1880px;top:762px;" width="14" height="14" viewBox="0 0 14 14"><path d="M1.5 1.5 V12.5 M1.5 1.5 L12.5 7" stroke="#f8f8f8" stroke-width="0.9" fill="none"/><path d="M1.5 12.5 L12.5 7" stroke="#a8a8a8" stroke-width="0.9"/></svg>
<div class="t" style="left:1589.70px;top:761.20px;font-size:13px;line-height:16px;color:#111;letter-spacing:-0.304px;">Time Lapse</div>
<svg class="r" style="left:1880px;top:783px;" width="14" height="14" viewBox="0 0 14 14"><path d="M1.5 1.5 V12.5 M1.5 1.5 L12.5 7" stroke="#f8f8f8" stroke-width="0.9" fill="none"/><path d="M1.5 12.5 L12.5 7" stroke="#a8a8a8" stroke-width="0.9"/></svg>
<div class="t" style="left:1589.70px;top:782.20px;font-size:13px;line-height:16px;color:#111;letter-spacing:-0.278px;">Tracking</div>
<svg class="r" style="left:1880px;top:804px;" width="14" height="14" viewBox="0 0 14 14"><path d="M1.5 1.5 V12.5 M1.5 1.5 L12.5 7" stroke="#f8f8f8" stroke-width="0.9" fill="none"/><path d="M1.5 12.5 L12.5 7" stroke="#a8a8a8" stroke-width="0.9"/></svg>
<div class="t" style="left:1589.70px;top:803.20px;font-size:13px;line-height:16px;color:#111;letter-spacing:-0.294px;">Transform</div>
<svg class="r" style="left:1880px;top:825px;" width="14" height="14" viewBox="0 0 14 14"><path d="M1.5 1.5 V12.5 M1.5 1.5 L12.5 7" stroke="#f8f8f8" stroke-width="0.9" fill="none"/><path d="M1.5 12.5 L12.5 7" stroke="#a8a8a8" stroke-width="0.9"/></svg>
<div class="t" style="left:1589.70px;top:824.20px;font-size:13px;line-height:16px;color:#111;letter-spacing:-0.210px;">Utilities</div>
<div class="t" style="left:1589.70px;top:845.20px;font-size:13px;line-height:16px;color:#111;letter-spacing:-0.299px;">Volume Viewer</div>
<svg class="r" style="left:1880px;top:876px;" width="14" height="14" viewBox="0 0 14 14"><path d="M1.5 1.5 V12.5 M1.5 1.5 L12.5 7" stroke="#f8f8f8" stroke-width="0.9" fill="none"/><path d="M1.5 12.5 L12.5 7" stroke="#a8a8a8" stroke-width="0.9"/></svg>
<div class="t" style="left:1589.70px;top:875.50px;font-size:13px;line-height:16px;color:#111;letter-spacing:-0.345px;">Debug</div>
<svg class="r" style="left:1880px;top:897px;" width="14" height="14" viewBox="0 0 14 14"><path d="M1.5 1.5 V12.5 M1.5 1.5 L12.5 7" stroke="#f8f8f8" stroke-width="0.9" fill="none"/><path d="M1.5 12.5 L12.5 7" stroke="#a8a8a8" stroke-width="0.9"/></svg>
<div class="t" style="left:1589.70px;top:896.50px;font-size:13px;line-height:16px;color:#111;letter-spacing:-0.330px;">Sandbox</div>
<svg class="r" style="left:1880px;top:918px;" width="14" height="14" viewBox="0 0 14 14"><path d="M1.5 1.5 V12.5 M1.5 1.5 L12.5 7" stroke="#f8f8f8" stroke-width="0.9" fill="none"/><path d="M1.5 12.5 L12.5 7" stroke="#a8a8a8" stroke-width="0.9"/></svg>
<div class="t" style="left:1589.70px;top:917.50px;font-size:13px;line-height:16px;color:#111;letter-spacing:-0.325px;">AutoRun</div>
<svg class="r" style="left:1880px;top:939px;" width="14" height="14" viewBox="0 0 14 14"><path d="M1.5 1.5 V12.5 M1.5 1.5 L12.5 7" stroke="#f8f8f8" stroke-width="0.9" fill="none"/><path d="M1.5 12.5 L12.5 7" stroke="#a8a8a8" stroke-width="0.9"/></svg>
<div class="t" style="left:1589.70px;top:938.50px;font-size:13px;line-height:16px;color:#111;letter-spacing:-0.366px;">B<span style="font-family:'Liberation Serif',serif;font-weight:700;">I</span>OP</div>
<svg class="r" style="left:1880px;top:960px;" width="14" height="14" viewBox="0 0 14 14"><path d="M1.5 1.5 V12.5 M1.5 1.5 L12.5 7" stroke="#f8f8f8" stroke-width="0.9" fill="none"/><path d="M1.5 12.5 L12.5 7" stroke="#a8a8a8" stroke-width="0.9"/></svg>
<div class="t" style="left:1589.70px;top:959.50px;font-size:13px;line-height:16px;color:#111;letter-spacing:-0.292px;">BigDataViewer-Playground</div>
<svg class="r" style="left:1880px;top:981px;" width="14" height="14" viewBox="0 0 14 14"><path d="M1.5 1.5 V12.5 M1.5 1.5 L12.5 7" stroke="#f8f8f8" stroke-width="0.9" fill="none"/><path d="M1.5 12.5 L12.5 7" stroke="#a8a8a8" stroke-width="0.9"/></svg>
<div class="t" style="left:1589.70px;top:980.50px;font-size:13px;line-height:16px;color:#111;letter-spacing:-0.332px;">Kymograph</div>
<svg class="r" style="left:1880px;top:1002px;" width="14" height="14" viewBox="0 0 14 14"><path d="M1.5 1.5 V12.5 M1.5 1.5 L12.5 7" stroke="#f8f8f8" stroke-width="0.9" fill="none"/><path d="M1.5 12.5 L12.5 7" stroke="#a8a8a8" stroke-width="0.9"/></svg>
<div class="t" style="left:1589.70px;top:1001.50px;font-size:13px;line-height:16px;color:#111;letter-spacing:-0.260px;">Labkit</div>
<svg class="r" style="left:1880px;top:1023px;" width="14" height="14" viewBox="0 0 14 14"><path d="M1.5 1.5 V12.5 M1.5 1.5 L12.5 7" stroke="#f8f8f8" stroke-width="0.9" fill="none"/><path d="M1.5 12.5 L12.5 7" stroke="#a8a8a8" stroke-width="0.9"/></svg>
<div class="t" style="left:1589.70px;top:1022.50px;font-size:13px;line-height:16px;color:#111;letter-spacing:-0.253px;">Scripting</div>
<div class="t" style="left:1805.00px;top:206.10px;font-size:13px;line-height:16px;color:#111;letter-spacing:-0.188px;">Ctrl+Shift+M</div>
<div class="r" style="left:1588px;top:249px;width:307px;height:1px;background:#a8a8a8;"></div>
<div class="r" style="left:1588px;top:250px;width:307px;height:1px;background:#fafafa;"></div>
<div class="r" style="left:1588px;top:867px;width:307px;height:1px;background:#a8a8a8;"></div>
<div class="r" style="left:1588px;top:868px;width:307px;height:1px;background:#fafafa;"></div>
<div class="r" style="left:1587px;top:359px;width:123px;height:139px;background:#eeeeee;border:1px solid #c4c4c4;box-sizing:border-box;box-shadow:1px 2px 4px rgba(0,0,0,0.25);"></div>
<div class="r" style="left:1589px;top:382px;width:119px;height:20px;background:#c8c8c8;border:1px solid #b4b4b4;box-sizing:border-box;"></div>
<div class="t" style="left:1591.50px;top:364.80px;font-size:13px;line-height:16px;color:#111;letter-spacing:-0.257px;">BigStitcher</div>
<div class="t" style="left:1591.50px;top:385.80px;font-size:13px;line-height:16px;color:#111;letter-spacing:-0.297px;">General</div>
<svg class="r" style="left:1692px;top:386px;" width="14" height="14" viewBox="0 0 14 14"><path d="M2 1.5 L12.5 7 L2 12.5 Z" fill="#dcdcdc" stroke="#b8b8b8" stroke-width="0.8"/></svg>
<div class="t" style="left:1591.50px;top:406.80px;font-size:13px;line-height:16px;color:#111;letter-spacing:-0.282px;"><span style="font-family:'Liberation Serif',serif;font-weight:700;">I</span>/O</div>
<svg class="r" style="left:1692px;top:407px;" width="14" height="14" viewBox="0 0 14 14"><path d="M1.5 1.5 V12.5 M1.5 1.5 L12.5 7" stroke="#f8f8f8" stroke-width="0.9" fill="none"/><path d="M1.5 12.5 L12.5 7" stroke="#a8a8a8" stroke-width="0.9"/></svg>
<div class="t" style="left:1591.50px;top:427.80px;font-size:13px;line-height:16px;color:#111;letter-spacing:-0.254px;"><span style="font-family:'Liberation Serif',serif;font-weight:700;">I</span>nterest Points</div>
<svg class="r" style="left:1692px;top:428px;" width="14" height="14" viewBox="0 0 14 14"><path d="M1.5 1.5 V12.5 M1.5 1.5 L12.5 7" stroke="#f8f8f8" stroke-width="0.9" fill="none"/><path d="M1.5 12.5 L12.5 7" stroke="#a8a8a8" stroke-width="0.9"/></svg>
<div class="t" style="left:1591.50px;top:448.80px;font-size:13px;line-height:16px;color:#111;letter-spacing:-0.249px;">Stitching</div>
<svg class="r" style="left:1692px;top:449px;" width="14" height="14" viewBox="0 0 14 14"><path d="M1.5 1.5 V12.5 M1.5 1.5 L12.5 7" stroke="#f8f8f8" stroke-width="0.9" fill="none"/><path d="M1.5 12.5 L12.5 7" stroke="#a8a8a8" stroke-width="0.9"/></svg>
<div class="t" style="left:1591.50px;top:478.10px;font-size:13px;line-height:16px;color:#111;letter-spacing:-0.285px;">Batch Processing</div>
<svg class="r" style="left:1692px;top:479px;" width="14" height="14" viewBox="0 0 14 14"><path d="M1.5 1.5 V12.5 M1.5 1.5 L12.5 7" stroke="#f8f8f8" stroke-width="0.9" fill="none"/><path d="M1.5 12.5 L12.5 7" stroke="#a8a8a8" stroke-width="0.9"/></svg>
<div class="r" style="left:1590px;top:470px;width:118px;height:1px;background:#a8a8a8;"></div>
<div class="r" style="left:1590px;top:471px;width:118px;height:1px;background:#fafafa;"></div>
<div class="r" style="left:1710px;top:383px;width:170px;height:23px;background:#eeeeee;border:1px solid #c4c4c4;box-sizing:border-box;box-shadow:1px 2px 4px rgba(0,0,0,0.25);"></div>
<div class="r" style="left:1712px;top:384px;width:166px;height:20px;background:#c8c8c8;border:1px solid #b4b4b4;box-sizing:border-box;"></div>
<div class="t" style="left:1712.30px;top:386.50px;font-size:13px;line-height:16px;color:#111;letter-spacing:-0.273px;">Tools</div>
<svg class="r" style="left:1862px;top:387px;" width="14" height="14" viewBox="0 0 14 14"><path d="M2 1.5 L12.5 7 L2 12.5 Z" fill="#dcdcdc" stroke="#b8b8b8" stroke-width="0.8"/></svg>
<div class="r" style="left:1710px;top:405px;width:205px;height:213px;background:#eeeeee;border:1px solid #c4c4c4;box-sizing:border-box;box-shadow:1px 2px 4px rgba(0,0,0,0.25);"></div>
<div class="r" style="left:1712px;top:512px;width:201px;height:21px;background:#c8c8c8;border:1px solid #b4b4b4;box-sizing:border-box;"></div>
<div class="t" style="left:1714.00px;top:409.70px;font-size:13px;line-height:16px;color:#111;letter-spacing:-0.249px;"><span style="font-family:'Liberation Serif',serif;font-weight:700;">I</span>ntensity</div>
<svg class="r" style="left:1896px;top:410px;" width="14" height="14" viewBox="0 0 14 14"><path d="M1.5 1.5 V12.5 M1.5 1.5 L12.5 7" stroke="#f8f8f8" stroke-width="0.9" fill="none"/><path d="M1.5 12.5 L12.5 7" stroke="#a8a8a8" stroke-width="0.9"/></svg>
<div class="t" style="left:1714.00px;top:430.70px;font-size:13px;line-height:16px;color:#111;letter-spacing:-0.379px;">PSF</div>
<svg class="r" style="left:1896px;top:431px;" width="14" height="14" viewBox="0 0 14 14"><path d="M1.5 1.5 V12.5 M1.5 1.5 L12.5 7" stroke="#f8f8f8" stroke-width="0.9" fill="none"/><path d="M1.5 12.5 L12.5 7" stroke="#a8a8a8" stroke-width="0.9"/></svg>
<div class="t" style="left:1714.00px;top:451.70px;font-size:13px;line-height:16px;color:#111;letter-spacing:-0.255px;">Select <span style="font-family:'Liberation Serif',serif;font-weight:700;">I</span>lluminations</div>
<div class="t" style="left:1714.00px;top:472.70px;font-size:13px;line-height:16px;color:#111;letter-spacing:-0.277px;">Apply Transformations</div>
<div class="t" style="left:1714.00px;top:493.70px;font-size:13px;line-height:16px;color:#111;letter-spacing:-0.289px;">Define Bounding Box</div>
<div class="t" style="left:1714.00px;top:514.70px;font-size:13px;line-height:16px;color:#111;letter-spacing:-0.272px;">Duplicate Transformations</div>
<div class="t" style="left:1714.00px;top:535.70px;font-size:13px;line-height:16px;color:#111;letter-spacing:-0.278px;">Display View</div>
<div class="t" style="left:1714.00px;top:556.70px;font-size:13px;line-height:16px;color:#111;letter-spacing:-0.257px;">Specify Calibration</div>
<div class="t" style="left:1714.00px;top:577.70px;font-size:13px;line-height:16px;color:#111;letter-spacing:-0.245px;">Split <span style="font-family:'Liberation Serif',serif;font-weight:700;">I</span>mages (virtual)</div>
<div class="t" style="left:1714.00px;top:598.70px;font-size:13px;line-height:16px;color:#111;letter-spacing:-0.257px;">Switch Attributes (experimental)</div>
<svg class="r" style="left:1864px;top:519px;" width="14" height="22" viewBox="0 0 14 22"><path d="M1.5 1.5 L1.5 17 L5.2 13.4 L8 19.5 L10.6 18.3 L7.9 12.4 L12.8 12.4 Z" fill="#111" stroke="#fff" stroke-width="1.1"/></svg>
</body></html>
